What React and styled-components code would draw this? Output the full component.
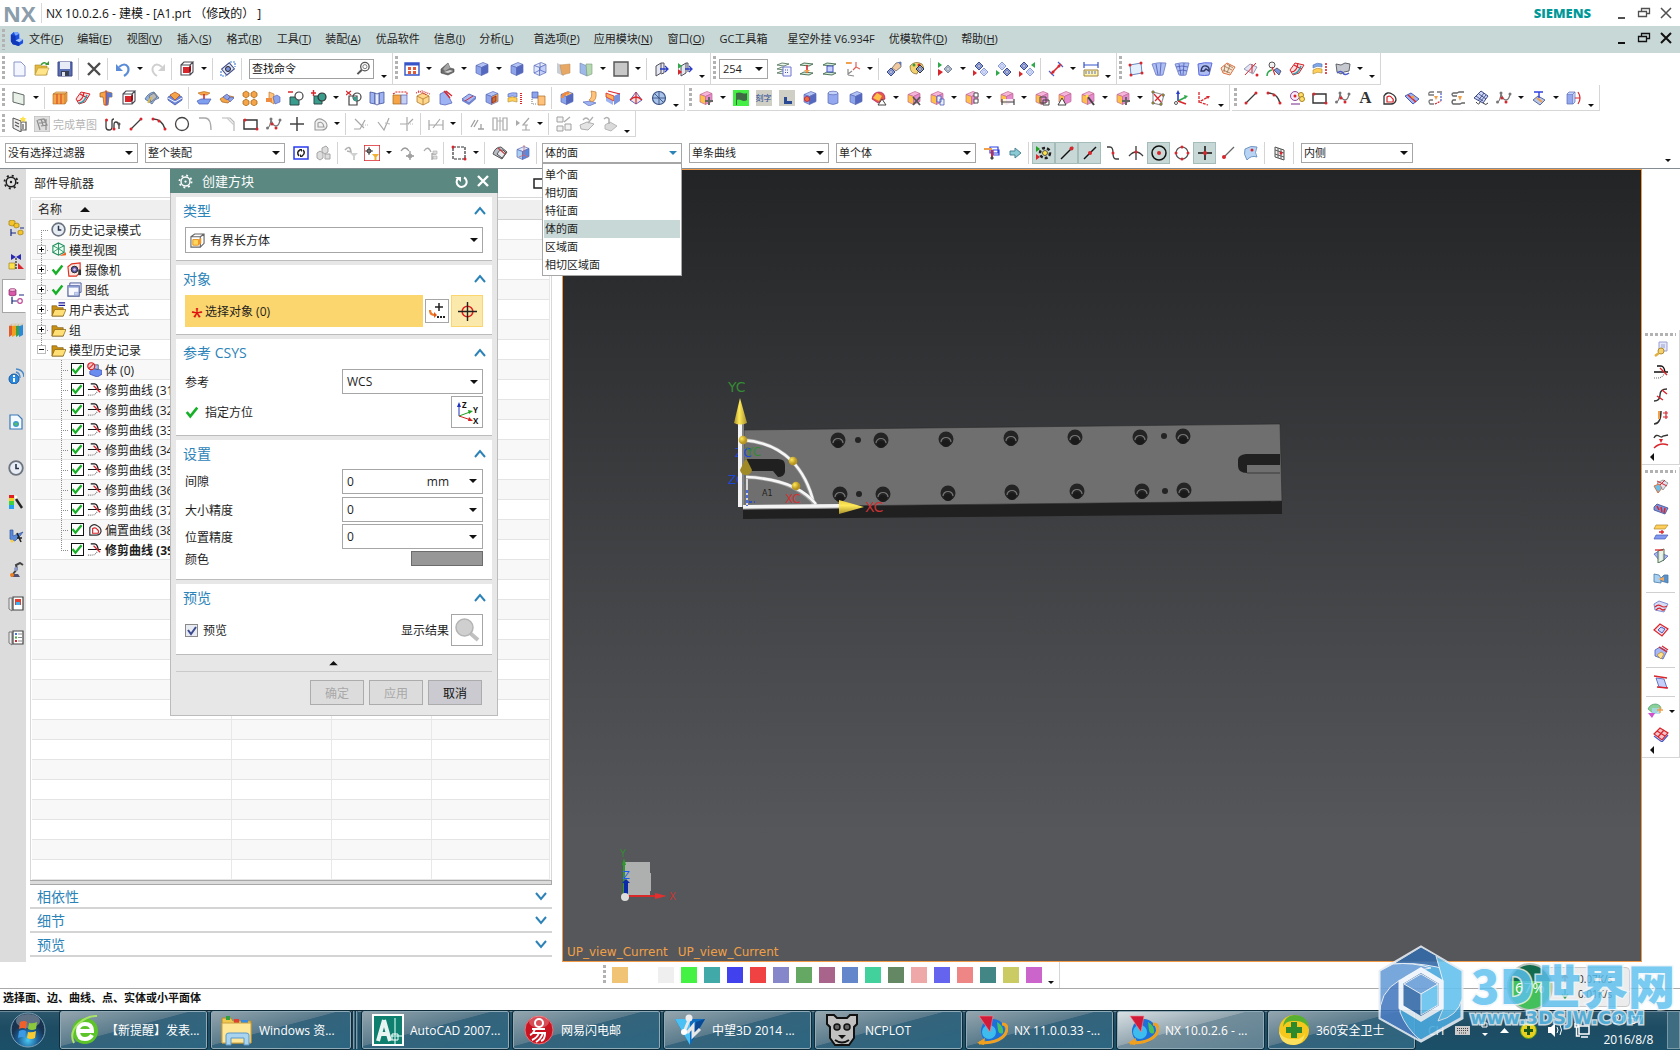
import React from 'react';
import styled, { createGlobalStyle, css } from 'styled-components';

const GlobalStyle = createGlobalStyle`
  * { box-sizing: border-box; }
  body {
    margin: 0;
    background: #fff;
    color: #1e1e1e;
    font-family: 'Open Sans', 'Noto Sans CJK SC', sans-serif;
    font-size: 11px;
    text-spacing-trim: space-all;
  }
  button, select, input { font: inherit; color: inherit; }
  button { border: 0; padding: 0; background: none; }
  ul { list-style: none; margin: 0; padding: 0; }
  svg { display: block; }
`;

/* ---------- icon drawings, all on a 16 x 16 grid ---------- */

const BLUE = '#7b93dc';
const DARK = '#4a4a55';
const RED = '#d8262c';
const ORANGE = '#f2a04a';

const Iso = ({ t = '#b4c3f5', l = '#8ea4ea', r = '#5468c0', s = '#5a6cb4' }) => (
  <g stroke={s} strokeWidth=".7" strokeLinejoin="round">
    <path d="M2 4.5 9 1.5l5 2-6.5 3z" fill={t} />
    <path d="M2 4.5 7.5 6.5v8L2 12z" fill={l} />
    <path d="M7.5 6.5 14 3.5v8l-6.5 3z" fill={r} />
  </g>
);
const Part = () => <Iso t="#f6b6dc" l="#ffc04a" r="#e58ad0" s="#c06a90" />;
const Dot = ({ x, y, c = RED, r = 1.5 }) => <circle cx={x} cy={y} r={r} fill={c} />;
const Line = ({ d, c = '#3c3c3c', w = 1.2, dash }) => (
  <path d={d} stroke={c} strokeWidth={w} fill="none" strokeDasharray={dash} />
);
const Gem = ({ x = 8, y = 8, c = '#8fa2e0', s = '#3d4a86' }) => (
  <g>
    <path d={`M${x - 4} ${y}l4-4 4 4-4 4z`} fill={c} stroke={s} strokeWidth="1" />
    <circle cx={x} cy={y} r="1.3" fill="#fff" stroke={s} strokeWidth=".6" />
  </g>
);

const glyphs = {
  nx: <><path d="M2 4 5 1h4l2 2v5l4 1v4l-5 3-6-2-2-3z" fill="#1b50e0" /><path d="M5 1h4l2 2-4 2z" fill="#7aa8ff" /><path d="M7 10l4-2 4 1-4 3z" fill="#a8c8ff" /><path d="M2 4l5 1v6l4 1v4l-7-2-2-3z" fill="#1038b8" /></>,
  fresh: <path d="M3 1h7l4 4v10H3z" fill="#f4f6ff" stroke="#8a96c8" />,
  open: <><path d="M1 4h5l1 1h6v9H1z" fill="#e4b83c" stroke="#a88420" strokeWidth=".6" /><path d="M1 14 4 7h11l-3 7z" fill="#ffe48a" stroke="#b89838" strokeWidth=".6" /><Line d="M7 4q3-4 6-1" c="#3a9a3a" w={1.6} /><path d="M11 4h4V0z" fill="#3a9a3a" /></>,
  save: <><path d="M1 1h14v14H1z" fill="#5a6eb4" stroke="#3a4884" /><path d="M3 1h10v7H3z" fill="#e8ecf6" /><path d="M4 10h8v5H4z" fill="#3a3f50" /><path d="M5 11h3v4H5z" fill="#dfe3ee" /></>,
  cut: <Line d="M2 2 14 14M14 2 2 14" w={2.4} c="#4c4c4c" />,
  undo: <><Line d="M4 6q6-5 9 0 2 5-4 9" c="#5a8cd8" w={2.2} /><path d="M1 3v7h7z" fill="#5a8cd8" /></>,
  redo: <><Line d="M12 6Q6 1 3 6q-2 5 4 9" c="#d0d0d0" w={2} /><path d="M15 3v7H8z" fill="#d0d0d0" /></>,
  redcube: <><path d="M2 4h9v10H2zM2 4l3-3h9l-3 3M14 1v10l-3 3" fill="none" stroke={DARK} strokeWidth="1.1" /><path d="M4 6h6v6H4z" fill={RED} /><path d="M10 6l2-2v6l-2 2z" fill="#8a1016" /></>,
  orient: <><g transform="rotate(-40 8 8)"><path d="M3 4h10v8H3z" fill="#dfe4f5" stroke="#3d4a86" /></g><circle cx="8" cy="8" r="2.5" fill={BLUE} stroke="#222" /><Line d="M1 10v5h5M10 1h5v5" c="#4a86d8" dash="2 1" /></>,
  search: <><circle cx="9.5" cy="6" r="4.5" fill="none" stroke="#555" strokeWidth="1.4" /><circle cx="9.5" cy="6" r="2.2" fill="none" stroke="#777" /><Line d="M6 9.5 1.5 14" w={2.2} c="#555" /></>,
  windows: <><path d="M1 2h14v12H1z" fill="#fff" stroke="#3454c8" strokeWidth="1.4" /><path d="M1 2h14v2.5H1z" fill="#3454c8" /><path d="M4 6h3v3H4zM9 6h3v3H9zM4 10h3v3H4zM9 10h3v3H9z" fill="#e05a3a" /></>,
  solid: <><path d="M2 8l7-6 2 5 4 1v3l-6 3-7-2z" fill="#6c6c6c" stroke="#444" strokeWidth=".6" /><path d="M9 2l2 5-5 3-2-2z" fill="#a5a5a5" /><path d="M5 11l6-2 3 1-5 2z" fill="#d4d4d4" /></>,
  cube: <Iso />,
  wirecube: <><Iso t="#e4eaff" l="#dfe6ff" r="#c4cff8" /><Line d="M2 12l6-3 6 2.5M8 9V2" c="#5468c0" w={0.8} /></>,
  plane: <><path d="M2 2l7 3v10l-7-3z" fill="#c9cdd6" /><path d="M5 4l10-1v9l-8 2z" fill="#e8a865" stroke="#b98a55" strokeWidth=".5" /></>,
  plane2: <><path d="M2 2l7 3v10l-7-3z" fill="#9eb8e8" stroke="#6f86b5" strokeWidth=".6" /><path d="M8 3h6v10l-5 2z" fill="#b6d8b0" stroke="#7a9a78" strokeWidth=".6" /></>,
  greybox: <path d="M1 1h14v14H1z" fill="#c8c8c8" stroke="#555" strokeWidth="1.4" />,
  door: <><path d="M2 5l5-3v10l-5 3zM7 2h3v10l-3 1" fill="#e4e6f0" stroke="#50505c" /><Line d="M6 8h8M11 5l3 3-3 3" c="#2a3cc8" w={1.3} /></>,
  door2: <><path d="M4 5l5-3v10l-5 3zM9 2h2v9" fill="#e4e6f0" stroke="#50505c" /><path d="M1 2l4 3-4 3z" fill="#2fa84a" /><path d="M1 8l4 3-4 3z" fill={RED} /><Line d="M8 8h6M12 5l3 3-3 3" c="#2a3cc8" w={1.3} /></>,
  layers: <><path d="M1 4l5-2 7 1-5 2zM1 8l5-2 7 1-5 2zM1 12l5-2 7 1-5 2z" fill="#eef6ee" stroke="#5c7c68" strokeWidth=".9" /><path d="M7 6h8v9H7z" fill="#f6f6ff" stroke="#6a74d0" /><Line d="M9 9h4M9 11.5h4" c="#4452c0" dash="1 1" /></>,
  layermove: <><path d="M1 4l4-2 9 1-4 2zM1 13l4-2 9 1-4 2z" fill="#d7ecd9" stroke="#40684c" strokeWidth=".9" /><Line d="M8 4v8" c={RED} w={1.6} /><path d="M5 9h6l-3 3z" fill={ORANGE} /></>,
  layercopy: <><path d="M1 4l4-2 9 1-4 2zM1 13l4-2 9 1-4 2z" fill="#d7ecd9" stroke="#40684c" strokeWidth=".9" /><path d="M5 5h6v6H5z" fill="#c9d2fb" stroke="#4452c0" /></>,
  csys: <><Line d="M3 14V8M3 14l6 1M3 13l4-3" c="#8a8a8a" /><Line d="M1 2h6M11 1v5l4 2M11 6l-3 3" c="#e06058" /><path d="M1 1h5v2H1z" fill={ORANGE} /></>,
  hand: <><Gem x={5} y={11} /><path d="M6 7l4-5 5-1v5l-5 4z" fill="#f0c9a0" stroke="#555" strokeWidth=".7" /><path d="M12 1h3v4z" fill="#5b78c8" /></>,
  palette: <><path d="M1 5q5-6 12-2 4 6-2 7-3 0-3 3-7 0-7-8z" fill="#f3d070" stroke="#8a7434" strokeWidth=".8" /><Dot x={5} y={4} c="#3a9a3a" /><Dot x={10} y={4} /><Gem x={11} y={8} s="#333" /></>,
  gemred: <><path d="M0 8l5 3-5 4z" fill={RED} /><path d="M0 1l4 3-4 3z" fill="#2fa84a" /><Gem x={10} y={8} c="#aab7c8" s="#7b88a0" /></>,
  gem2: <><Gem x={6} y={5} /><Gem x={11} y={11} c="#cfd9fa" s="#8a9ad8" /><path d="M0 9l4 3-4 3z" fill={RED} /></>,
  gem3: <><Gem x={6} y={5} c="#cfd9fa" s="#8a9ad8" /><Gem x={11} y={11} /><path d="M0 9l4 3-4 3z" fill="#2fa84a" /></>,
  gem4: <><Gem x={5} y={5} /><Gem x={11} y={11} c="#cfd9fa" s="#8a9ad8" /><path d="M16 1l-4 3 4 3z" fill="#2fa84a" /><path d="M0 10l4 3-4 3z" fill={RED} /></>,
  measure: <><Line d="M1 10l5 5M10 1l5 5" c="#4a5ac8" /><Line d="M3 13 13 3" c={RED} w={1.6} /><Dot x={5} y={11} /><Dot x={11} y={5} /></>,
  ruler: <><Line d="M1 4h14M1 1v6M15 1v6" c="#3454c8" /><path d="M1 9h14v6H1z" fill="#fff3b0" stroke="#a08438" /><Line d="M3 10v3M6 10v3M9 10v3M12 10v3" c="#3454c8" w={0.8} /></>,
  fourpt: <><path d="M2 4l11-2 1 10-11 2z" fill="#e4f0fb" stroke="#6a8ac0" /><Dot x={2} y={4} /><Dot x={13} y={2} /><Dot x={14} y={12} /><Dot x={3} y={14} /></>,
  ruled: <><path d="M1 3q6-2 14-1l-3 12q-4 1-7 0z" fill="#aebdf2" stroke="#6a7ac4" strokeWidth=".8" /><Line d="M5 3l2 11M10 2l-1 12" c="#4a5ab4" w={0.8} /></>,
  mesh: <><path d="M1 3q6-2 14-1l-3 12q-4 1-7 0z" fill="#aebdf2" stroke="#6a7ac4" strokeWidth=".8" /><Line d="M5 3l2 11M10 2l-1 12M2 6q6-2 12 0M4 10q5-2 9 0" c="#4a5ab4" w={0.8} /></>,
  studio: <><path d="M1 3q6-2 14-1l-3 12q-4 1-10 0z" fill="#aebdf2" stroke="#5a6ae0" strokeWidth="1" /><Line d="M4 10q1-6 5-5 4 1 3 5l-3-2-2 2z" w={1.4} c="#333a66" /></>,
  fit: <><path d="M1 7l6-5 8 4-5 8-7-2z" fill="#f6e6d2" stroke="#e07040" /><Line d="M4 5l8 4M7 3l6 4M3 9l7 3M5 4l-1 7M10 4 7 12" c="#9a7050" w={0.8} /></>,
  sheetred: <><path d="M1 8l6-5 7 3-4 7z" fill="#e2e6f4" stroke="#8088a8" strokeWidth=".8" /><Line d="M2 14 13 2M9 3v9" c={RED} w={1} /><Dot x={14} y={14} /></>,
  sweep: <><circle cx="6" cy="4" r="3" fill="#f2f2f2" stroke="#555" /><Line d="M1 15q0-5 5-6" c="#2fa84a" w={1.5} /><Line d="M6 6l3 8" c={RED} /><path d="M8 9l3-2 4 3-2 4z" fill={BLUE} stroke="#334" strokeWidth=".7" /></>,
  swept: <><path d="M1 9l5-7 9 2-5 8-6 2z" fill="#f7dede" stroke={RED} /><Line d="M2 11q6 0 7-9M5 4q5 3 8 4" c={RED} /><Line d="M4 13q5 0 8-8" c="#2fa0b0" w={1.5} /></>,
  offset: <><path d="M1 4q4-3 9-1v3q-5-2-9 1z" fill="#7fa8e8" stroke="#5070b0" strokeWidth=".6" /><path d="M1 9q4-3 9-1v4q-5-2-9 1z" fill="#ffcf5a" stroke="#b08828" strokeWidth=".6" /><Line d="M14 2v12" c={RED} dash="2 1" w={1.6} /></>,
  grey: <><path d="M1 3l5 1 4-2 5 1-1 7-5 1-3 2-4-2z" fill="#c5c8cf" stroke="#54565c" strokeWidth=".9" /><Line d="M2 12q4-3 6 0t6 0" c="#4a5ac8" w={1.5} /></>,
  datum: <path d="M2 2l11 3v10L2 12z" fill="#e8f0e8" stroke="#5f6a66" />,
  extrude: <><path d="M1 4l3-2h11l-2 2z" fill="#ffd28a" stroke="#b06a20" strokeWidth=".6" /><path d="M1 4h12v10H1zM13 4l2-2v9l-2 3" fill="#f5a548" stroke="#b06a20" strokeWidth=".6" /><Line d="M5 4v10M9 4v10" c="#d8502c" w={1.2} /></>,
  revolve: <><path d="M2 3q6-3 12 0v4h-3l-1 8H6L5 7H2z" fill="#f5a548" stroke="#9a5a20" strokeWidth=".7" /><path d="M8 2v13h2l1-8h3V3z" fill="#5b78c8" /><Line d="M8 0v16" c={RED} w={0.8} /></>,
  blend: <><path d="M1 9q3-6 9-7l5 6q-5 1-7 6z" fill="#8db2e6" stroke="#50648c" strokeWidth=".8" /><path d="M5 6l5-3 3 4-6 5z" fill="#b9b9b9" stroke="#555" strokeWidth=".6" /><Line d="M4 13l3-6" c="#e8b930" w={1.6} /></>,
  thick: <><path d="M1 7l7-4 7 4v3l-7 5-7-5z" fill="#6d86dc" stroke="#3c4c94" strokeWidth=".7" /><path d="M3 5l5-3 5 3-5 5z" fill="#f5a548" stroke="#b04a20" strokeWidth=".7" /><path d="M1 8l7 4 7-4" fill="none" stroke="#fff" /></>,
  pad: <><path d="M2 3q6-3 12 0l-3 2H5z" fill="#f5a548" stroke="#b06a20" strokeWidth=".6" /><Line d="M8 4v6" c={RED} w={1.6} /><path d="M1 11l4-2h10l-3 5H3z" fill="#7fa0ee" stroke="#4a5ab4" strokeWidth=".7" /></>,
  pocket: <><path d="M1 9l6-4 8 2-6 6-6-1z" fill="#f5a548" stroke="#a06020" strokeWidth=".7" /><path d="M4 7l4-3 3 3-3 3zM9 9l3-2 3 1-4 4z" fill="#8ea4ea" stroke="#4a5ab4" strokeWidth=".6" /></>,
  pattern: <g fill="#f5a548" stroke="#a86818" strokeWidth=".8"><path d="M1 3l3-2 3 2v3L4 8 1 6zM9 3l3-2 3 2v3l-3 2-3-2zM1 11l3-2 3 2v3l-3 2-3-2zM9 11l3-2 3 2v3l-3 2-3-2z" /></g>,
  mirror: <><path d="M4 2l5 2v10l-5-3z" fill="#ffc27a" stroke="#b06a20" strokeWidth=".6" /><path d="M1 8h6v4H1z" fill="#f08a3c" /><path d="M8 7l4-2 3 2v5l-5 2z" fill="#8ea4ea" stroke="#4a5ab4" strokeWidth=".6" /></>,
  unite: <><path d="M2 7h9v8H2z" fill="#3a9c8c" stroke="#2a4a48" /><circle cx="11" cy="6" r="4" fill="#fff" stroke="#444" strokeWidth="1.2" /><Line d="M0 2h5" c={RED} w={1.5} /></>,
  subtract: <><path d="M3 6h8v8H3z" fill="#3a9c8c" stroke="#2a4a48" /><circle cx="11" cy="7" r="4" fill="#3a9c8c" stroke="#333" strokeWidth="1.2" /><Line d="M0 3h5M2.5 0v6" c={RED} w={1.4} /></>,
  intersect: <><path d="M3 6h8v9H3z" fill="#fff" stroke="#444" strokeWidth="1.2" /><circle cx="11" cy="7" r="4" fill="none" stroke="#444" strokeWidth="1.2" /><path d="M7 7h4v4H8z" fill="#3a9c8c" /><Line d="M0 1l5 4M5 1 0 5" c={RED} /></>,
  book: <><path d="M1 2l5 1v11l-5-1zM15 2l-5 1v11l5-1z" fill="#9eb4f2" stroke="#44549c" strokeWidth=".8" /><path d="M6 3l2 1 2-1v11l-2 1-2-1z" fill="#e9ecfb" stroke="#44549c" strokeWidth=".8" /></>,
  split: <><path d="M1 5h8v9H1z" fill="#f5a548" stroke="#a86818" strokeWidth=".7" /><path d="M9 5h6v9H9z" fill="#c5d0f6" stroke="#5060b0" strokeWidth=".7" /><Line d="M1 4l3-2h11v3" c={RED} dash="2 1" /></>,
  shell: <><path d="M2 6l6-3 6 3v6l-6 3-6-3z" fill="#ffd88e" stroke="#b07a28" strokeWidth=".8" /><Line d="M2 6l6 3 6-3M8 9v6" c="#b07a28" w={0.8} /><Line d="M1 3l6-2 8 3M3 1l9 4" c={RED} dash="1 1" /></>,
  draft: <><path d="M2 4l6-3 6 12-7 2-5-1z" fill="#9eb4f2" stroke="#4a5ab4" strokeWidth=".7" /><Line d="M6 1l6 7M8 1l6 5" c={RED} w={1.3} /></>,
  slab: <><path d="M1 9l7-5 7 3-7 6z" fill="#a8b8f0" stroke="#4a5ab4" strokeWidth=".8" /><path d="M1 9v2l7 4v-2zM8 15l7-6V7l-7 6z" fill="#6f84d0" /><Line d="M4 11l8-5" c={RED} w={1} /></>,
  boxhole: <><Iso t="#b4c3f5" l="#8ea4ea" r="#f5a548" /><path d="M8 8l4-2v5l-4 2z" fill="#c07030" stroke="#802" strokeWidth=".6" /></>,
  thread: <><path d="M1 4q4-2 9-1v4q-5-2-9 0z" fill="#9eb4f2" stroke="#4a5ab4" strokeWidth=".6" /><path d="M1 8q4-2 9 0v4q-5-2-9 0z" fill="#ffcf5a" stroke="#b08828" strokeWidth=".6" /><Line d="M14 3v11" c={RED} dash="1 1" w={2} /></>,
  joinp: <><path d="M2 2h6v6H2z" fill="#8ea4ea" stroke="#4a5ab4" strokeWidth=".7" /><path d="M8 6h7v9H8z" fill="#ffc27a" stroke="#b06a20" strokeWidth=".7" /><Line d="M2 9v5h5" c="#888" dash="1 1" /></>,
  edge: <><Iso t="#ffc27a" l="#8ea4ea" r="#5468c0" /><Line d="M3 8q1-5 7-5" c="#f08a3c" w={2.4} /></>,
  flange: <><path d="M1 12l8-1 5 2-7 3z" fill="#9eb4f2" stroke="#4a5ab4" strokeWidth=".6" /><path d="M9 1l5 1q1 8-4 10l-3-2q4-3 2-9z" fill="#ffc27a" stroke="#b06a20" strokeWidth=".6" /></>,
  step: <><path d="M1 4l7 3v8l-7-4z" fill="#9eb4f2" /><path d="M1 3l8 3v5l-8-4z" fill="#ffb25a" stroke={RED} strokeWidth=".8" /><path d="M9 6l6-3v8l-6 4z" fill="#7b93dc" /><Line d="M3 1l12 3" c={RED} /></>,
  fan: <><path d="M8 2l6 8-6 4-6-4z" fill="#f7e2e2" stroke="#5a6ac8" /><Line d="M8 2v12M2 10q6-6 12 0" c={RED} /></>,
  wheel: <><circle cx="8" cy="8" r="6.5" fill="#a9c4ea" stroke="#3a5284" strokeWidth="1.2" /><Line d="M8 1v14M2 8h12M4 4l8 8" c="#3a5284" w={0.9} /></>,
  partmove: <><Part /><Line d="M11 7v8M7 11h8" c="#666" w={2} /></>,
  flag: <><path d="M0 0h16v16H0z" fill="#44ee44" /><path d="M3 3q4-1 6 0 3 1 5 0v7q-3 2-6 0-3-1-4 0v5H3z" fill="#3f6a45" /></>,
  engrave: <path d="M0 0h16v16H0z" fill="#cfcfc6" />,
  angle: <><path d="M0 0h16v16H0z" fill="#cfcfc6" /><path d="M5 7h3v4h5v3H5z" fill="#2a4a94" /></>,
  hole: <><Iso /><circle cx="5" cy="9" r="2.6" fill="#ee6a3c" stroke="#a03" strokeWidth=".6" /></>,
  cyl: <><path d="M3 3v10q5 3 10 0V3z" fill="#93a8ee" stroke="#5a6cb4" strokeWidth=".7" /><ellipse cx="8" cy="3" rx="5" ry="1.8" fill="#c6d2fa" stroke="#5a6cb4" strokeWidth=".7" /></>,
  ball: <><path d="M1 9q1-7 7-7 6 0 6 7l-7 4z" fill="#e05a4a" stroke="#a06" strokeWidth=".6" /><path d="M2 8l6 3 3-5-5-3z" fill="#ffc04a" /><path d="M7 15l4-6 4 6z" fill="#fff" stroke="#444" /></>,
  partdel: <><Part /><Line d="M7 7l7 8M14 7l-7 8" w={1.8} c="#555" /></>,
  partcopy: <><Part /><path d="M8 6h4v6H8zM11 9h4v6h-4z" fill="#eaf0ff" stroke="#4a5ab4" strokeWidth=".8" /></>,
  partpair: <><Part /><path d="M10 3h4v4h-4zM10 9h4v4h-4z" fill="#fff" stroke="#555" /></>,
  partdim: <><Part /><path d="M3 9h12v6H3z" fill="#fff" opacity=".8" /><Line d="M3 12h12M3 9v6M15 9v6" c="#444" /></>,
  partgrp: <><Part /><path d="M6 7h6v6H6zM9 10h6v5H9z" fill="none" stroke="#444" /></>,
  parttri: <><Part /><path d="M1 15l4-7 4 7z" fill="#fff" stroke="#444" /></>,
  partwand: <><Part /><Line d="M8 7l6 8" w={2} c="#444" /><Dot x={7} y={6} c="#ffe24a" /></>,
  partnodes: <><Line d="M3 2v11l8 2 3-10z" c="#999" /><Line d="M4 4l7 8M5 11l6-6" c={RED} /><path d="M2 1h2v2H2zM2 12h2v2H2zM12 4h2v2h-2zM10 13h2v2h-2z" fill="#ffe24a" stroke="#222" strokeWidth=".6" /></>,
  axes: <><Line d="M5 11V2" c="#2a3cc8" w={1.6} /><Line d="M5 11l8-4" c="#2fa84a" w={1.6} /><Line d="M5 11l8 3" c={RED} w={1.6} /><path d="M3 4l2-4 2 4z" fill="#2a3cc8" /><path d="M11 5l4 1-3 3z" fill="#2fa84a" /><circle cx="3" cy="13" r="1.5" fill="none" stroke="#555" /></>,
  axesred: <><Line d="M3 2v10l9-5M3 12l9 3" c={RED} dash="3 1" w={1.3} /><path d="M10 6l4 0-2 3z" fill={RED} /></>,
  line: <><Line d="M3 13 13 3" /><Dot x={3} y={13} /><Dot x={13} y={3} /></>,
  arc: <><Line d="M2 3q9 0 12 10" w={1.4} /><Dot x={2} y={3} /><Dot x={8} y={5} /><Dot x={14} y={13} /></>,
  circles: <><circle cx="6" cy="6" r="4.5" fill="#f8e8f8" stroke="#8a4a9a" /><Dot x={6} y={6} /><circle cx="12" cy="5" r="2.5" fill="#ffdf6a" stroke="#a88420" /><circle cx="13" cy="9" r="2.5" fill="#ffdf6a" stroke="#a88420" /><Line d="M2 14h9" c="#8a4a9a" /></>,
  rect: <><path d="M1 4h13v9H1z" fill="none" stroke="#333" strokeWidth="1.4" /><Dot x={2} y={4} /><Dot x={14} y={13} /></>,
  spline: <><Line d="M1 12q3 0 4-8 2 6 5 6 3 0 4-6" c="#777" w={1.3} /><Dot x={1.5} y={12} c="#777" /><Dot x={5} y={3} c="#777" /><Dot x={6} y={8} /><Dot x={14} y={4} c="#777" /><Dot x={10} y={12} /></>,
  region: <><path d="M3 14V6q3-5 8-2 4 2 4 6-1 4-5 4z" fill="none" stroke="#333" strokeWidth="1.3" /><path d="M6 12V7q3-2 5 1 2 1 1 4z" fill="none" stroke={RED} strokeWidth="1.2" /></>,
  surfcurve: <><path d="M1 6l6-3 8 6-6 5z" fill="#9eb4f2" stroke="#4a5ab4" /><Line d="M4 5l8 7" c={RED} w={1.6} /><Dot x={9} y={7} c={ORANGE} /></>,
  proj: <><Line d="M7 2H4Q1 2 2 5h5M6 10H3q-2 1 0 4h4M10 2h5" c="#777" w={1.3} /><path d="M7 6h4l-2 4z" fill={ORANGE} /><Line d="M8 14l6-3" c={RED} dash="2 1" /><Line d="M14 3v9" c="#4a5ac8" dash="2 1" /></>,
  proj2: <><Line d="M14 2H9L7 3H3Q1 4 3 6h4M6 10H3q-2 2 0 4h7l2-1h3" c="#666" w={1.3} /><path d="M8 6h4l-2 5z" fill={ORANGE} /></>,
  net: <><path d="M8 1l7 5-5 7-9-5z" fill="#cfd7f6" stroke="#3d4a86" /><Line d="M3 6l7 5M6 4l7 5M11 3 5 11M13 5l-6 7" c="#3d4a86" w={0.9} /><Line d="M3 12q3 4 4 0M10 13q3 3 5 0" w={1} /></>,
  extend: <><path d="M2 10l5-4 7 4-5 5z" fill="#b8c8ea" stroke="#5a6c9c" /><Line d="M3 2h9M8 2v6" c="#3040e0" w={1.4} /><Line d="M6 8l5 4" c={ORANGE} w={1.8} /></>,
  cylmove: <><path d="M1 4v10h6V4z" fill="#93a8ee" stroke="#5a6cb4" strokeWidth=".7" /><path d="M1 4l2-2h6L7 4M9 2v10l-2 2" fill="#c6d2fa" stroke="#5a6cb4" strokeWidth=".7" /><Line d="M9 8h5M12 2q4 6 0 12" c={RED} w={1.2} /></>,
  sketch: <><path d="M2 2l8 3v11l-8-4z" fill="#eee" stroke="#555" /><Line d="M4 6l4 2M4 9l4 2M10 6h5v8h-5M12 8v5" c="#555" /><path d="M12 0l1 2 2 0-1 2 1 2-3-1-2 1 0-2-1-2 2 0z" fill="#ffe24a" /></>,
  finish: <><path d="M0 0h16v16H0z" fill="#dedede" stroke="#b5b5b5" /><Line d="M3 4l3 10M4 4l6-1 3 6-6 1M7 3l2 6M5 7l6-1M12 3v11" c="#8c8c8c" /></>,
  profile: <><Line d="M1 5v6q0 3 3 3t3-3V5q0-2 2-2M9 13V9q0-3 2-3t3 3v4" w={1.3} /><Dot x={1.5} y={4} /><Dot x={9} y={13} /><Dot x={14} y={8} c="#555" /></>,
  circle: <circle cx="8" cy="8" r="6.5" fill="none" stroke="#444" strokeWidth="1.3" />,
  fillet: <Line d="M2 2h6q6 0 6 12" c="#a8a8a8" w={1.3} />,
  chamfer: <><Line d="M2 2h8l4 4v9" c="#b8b8b8" w={1.2} /><Line d="M7 2l7 7" c="#ccc" /></>,
  plus: <Line d="M8 1v14M1 8h14" c="#444" w={1.5} />,
  offg: <path d="M3 14V6q3-5 8-2 4 2 4 6-1 4-5 4zM6 11V7q3-2 5 1l1 3z" fill="#f2f2f2" stroke="#9a9a9a" strokeWidth="1.1" />,
  trimg: <><Line d="M2 3l9 9M1 13h6l5-9" c="#a8a8a8" /><Line d="M10 9h5" c="#bbb" dash="1 1" /></>,
  trimg2: <><Line d="M2 6l6 8 5-12" c="#a8a8a8" /><Line d="M9 7l5 1" c="#bbb" /></>,
  cornerg: <><Line d="M8 1v14M1 8h7M9 8l5-5" c="#a8a8a8" /><Line d="M9 8h6" c="#bbb" dash="1 1" /></>,
  dimg: <><Line d="M1 4v10M15 4v10M1 9h14M5 12l7-9" c="#a8a8a8" w={1.2} /></>,
  perp: <><Line d="M2 11l4-7M5 11l4-7M12 8v5M9 13h6" c="#a0a0a0" w={1.3} /></>,
  symg: <><path d="M1 2h4v12H1zM11 2h4v12h-4z" fill="none" stroke="#a8a8a8" strokeWidth="1.2" /><Line d="M8 1v14M5 5h6" c="#b5b5b5" /></>,
  conv: <><path d="M1 4l4 3-4 3z" fill="#aaa" /><Line d="M14 2 8 9h5M11 9v5M7 14h8" c="#a8a8a8" w={1.2} /></>,
  boxesg: <><path d="M1 1h6v5H1zM1 10h6v5H1zM9 8h6v6H9z" fill="#f4f4f4" stroke="#a0a0a0" /><Line d="M8 6l6-5" c="#aaa" /></>,
  cadg: <><path d="M1 9l7-3 7 2-6 6-7-1z" fill="#e4e4e4" stroke="#b0b0b0" /><Line d="M4 4q3-4 6 0M9 7l5-6" c="#b0b0b0" w={1.3} /></>,
  cadg2: <><path d="M3 9l5-3 7 4-6 5-6-2z" fill="#dadada" stroke="#b8b8b8" /><Line d="M2 3q3-3 5 0v5" c="#b0b0b0" w={1.5} /></>,
  refresh: <><path d="M1 2h14v12H1z" fill="#fff" stroke="#2a3cf0" strokeWidth="1.5" /><Line d="M6 11q-3-4 1-6M10 5q3 3-1 6" w={1.5} c="#222" /><path d="M6 4h3v3zM10 12H7V9z" fill="#222" /></>,
  asmg: <><path d="M6 3l4-2 2 2v4l-3 2-3-2zM1 8l3-2 3 2v5l-3 2-3-2zM9 9h5v5H9z" fill="#ddd" stroke="#a5a5a5" /></>,
  filterg: <><Line d="M2 5q5-6 6 2l-4-1" c="#b0b0b0" w={1.6} /><path d="M7 8h8l-3 3v4h-2v-4z" fill="#d0d0d0" /></>,
  filter: <><path d="M0 0h16v16H0z" fill="#fff" stroke={RED} strokeWidth="1.500" /><circle cx="5" cy="6" r="2" fill="none" stroke="#222" /><Line d="M5 2v8M1 6h8" c="#222" w={0.8} /><path d="M8 9h7l-2.5 3v3h-2v-3z" fill="#f0b030" /></>,
  target: <><Line d="M2 6q4-6 8 0M11 6v9M7 11h8" c="#999" w={1.3} /><circle cx="11" cy="11" r="2" fill="none" stroke="#999" /></>,
  treeg: <><Line d="M2 6q4-6 7 1M10 8v7M10 9h4M10 13h4" c="#aaa" w={1.3} /><path d="M11 6h4v3h-4zM11 11h4v3h-4z" fill="#ddd" stroke="#aaa" strokeWidth=".6" /></>,
  marquee: <><path d="M2 2h12v12H2z" fill="none" stroke="#333" strokeDasharray="3 1" strokeWidth="1.2" /><Dot x={2} y={2} /><Dot x={14} y={14} /></>,
  shade: <><path d="M1 9q2-7 8-7l6 5-5 7z" fill="#b9bdc6" stroke="#555" /><path d="M5 9q2-5 6-4l3 3-4 5z" fill="#e8eaf0" stroke="#555" /><Line d="M6 3l7 6" c="#c04040" /></>,
  bluebox: <><Iso t="#dce9ff" l="#a8d0f4" r="#5a8ae0" /><Line d="M9 0v10l4 2M9 10l-5 2" c="#e06060" w={0.8} /></>,
  pathsel: <><path d="M6 2h8v6H6zM9 5h6v5H9z" fill="none" stroke="#3040e0" strokeWidth="1.2" /><Line d="M0 4h8" c={ORANGE} w={2} /><Line d="M8 5v7" c={RED} w={2} /><path d="M6 13l2-2 2 2-2 2z" fill="#444" /></>,
  arrow: <path d="M3 6h5V3l6 5-6 5v-3H3z" fill="#8ccbd4" stroke="#4a8494" />,
  snapall: <><path d="M0 1l4 3-4 3z" fill="#22a022" /><path d="M0 9l4 3-4 3z" fill={RED} /><circle cx="9" cy="8" r="5" fill="none" stroke="#222" strokeDasharray="3 2" strokeWidth="2.5" /><circle cx="9" cy="8" r="2.5" fill="#ffe24a" stroke="#222" strokeWidth=".7" /></>,
  endpt: <><Line d="M2 14 14 2" c="#111" w={1.4} /><Dot x={12.5} y={3.5} r={2} /></>,
  midpt: <><Line d="M2 14 14 2" c="#111" w={1.4} /><Dot x={8} y={8} r={2} /></>,
  ctrlpt: <><Line d="M2 2h3q3 0 3 6t3 6h3" w={1.3} /><Dot x={8} y={8} /></>,
  inter: <><Line d="M8 1v14M1 11q7-8 14 0" w={1.3} /><Dot x={8} y={7} /></>,
  center: <><circle cx="8" cy="8" r="7" fill="none" stroke="#111" strokeWidth="1.5" /><Dot x={8} y={8} r={2} /></>,
  quad: <><circle cx="8" cy="8" r="6" fill="none" stroke="#555" strokeWidth="1.2" /><Dot x={8} y={2} /><Dot x={8} y={14} /><Dot x={2} y={8} /><Dot x={14} y={8} /></>,
  exist: <><Line d="M8 1v14M1 8h14" c="#111" w={1.5} /><Dot x={8} y={8} r={2} /></>,
  oncurve: <><Line d="M3 13 14 2" c="#666" /><Dot x={4} y={12} r={2} /></>,
  onface: <><path d="M2 4q6-4 12-2-3 6 0 10-6-2-10 3Q0 9 2 4z" fill="#b7d4f4" stroke="#5a84b8" strokeWidth=".8" /><Dot x={9} y={5} /></>,
  gridpt: <><path d="M3 2l9 3v10l-9-3z" fill="#eee" stroke="#555" /><Line d="M6 3v10M9 4v10M3 5l9 3M3 9l9 3" c="#555" w={0.9} /><Dot x={9} y={8} /></>,
  gear: <><circle cx="8" cy="8" r="4.8" fill="none" stroke="currentColor" strokeWidth="1.5" /><circle cx="8" cy="8" r="6.5" fill="none" stroke="currentColor" strokeWidth="1.8" strokeDasharray="2 3.1" /><circle cx="8" cy="8" r="1.2" fill="currentColor" /></>,
  asmnav: <><path d="M1 1l3-1 3 1v4L4 6 1 5zM10 11l3-1 2 1v3l-3 1-2-1z" fill="#f4c52a" stroke="#a07c10" strokeWidth=".7" /><path d="M6 4l3-1 2 1v3L8 8 6 7z" fill="#f4c52a" stroke="#a07c10" strokeWidth=".7" /><Line d="M3 9v7M3 13h5M12 8h4" c="#1a2a80" w={1.2} /></>,
  constr: <><path d="M3 0v6l5-3 5 3V0L8 3z" fill="#2a2ab4" /><path d="M1 9h6v6H1z" fill="#ffe24a" stroke="#a08420" strokeWidth=".7" /><path d="M10 9l6 6h-6z" fill={RED} /><Line d="M8 4v12" dash="2 1" c="#222" /></>,
  partnav: <><path d="M1 2v5q3 2 7 0V2z" fill="#d85aa8" stroke="#8a2a6a" strokeWidth=".7" /><ellipse cx="4.5" cy="2" rx="3.5" ry="1.4" fill="#f8c0e0" stroke="#8a2a6a" strokeWidth=".7" /><Line d="M4 9v7M4 13h5M11 7h5" c="#1a2a80" w={1.2} /><circle cx="12" cy="13" r="2.3" fill="#fff" stroke="#c04a98" strokeWidth="1.2" /></>,
  books: <><path d="M1 4l3-2v11l-3 2z" fill="#e05a2a" /><path d="M4 4l4-2v11l-4 2z" fill="#f0a020" /><path d="M8 4l3-2v11l-3 2z" fill="#38a048" /><path d="M11 4l4-2v11l-4 2z" fill="#2a8ad8" /><path d="M1 4l3-3h12l-1 2-3 1z" fill="#d8d0c0" opacity=".7" /></>,
  info: <><circle cx="6" cy="11" r="5" fill="#2a8ae0" stroke="#1a5aa0" /><path d="M5 10h2v4H5zM5 7h2v2H5z" fill="#fff" /><Line d="M8 4q4 1 4 6M8 1q8 1 8 8" c="#4a8ac8" w={1.4} /></>,
  page: <><path d="M2 1h8l4 4v10H2z" fill="#f4faff" stroke="#3a78b8" strokeWidth="1.2" /><circle cx="8" cy="10" r="3" fill="#3a9ad0" /><path d="M6 10q2-3 4 0l-2 2z" fill="#58c058" /></>,
  clock: <><circle cx="8" cy="8" r="6.8" fill="#e8edf4" stroke="#6c7480" strokeWidth="1.8" /><Line d="M8 4v4.5h3" c="#26344c" w={1.6} /></>,
  rainbow: <><path d="M1 1h5v3H1z" fill="#e02020" /><path d="M1 4h5v3H1z" fill="#f0d020" /><path d="M1 7h5v4H1z" fill="#40d040" /><path d="M1 11h5v4H1z" fill="#20a0f0" /><Line d="M8 5l6 9" w={2.4} c="#222" /><Dot x={8} y={3} c="#ffe" /></>,
  tool: <><path d="M2 2h3v6l10-4-3 4-5 5-5-2z" fill="#5a8ad8" stroke="#3454a0" strokeWidth=".7" /><Line d="M9 5l4 9M9 10h5" w={1.6} c="#222" /><Dot x={4} y={13} c="#ffd030" /></>,
  robot: <><Line d="M5 12l4-5-1-4 4-2 3 2" c="#444" w={2} /><Dot x={8} y={7} c="#8a9ac8" r={2} /><path d="M3 12h7l2 3H3z" fill="#505070" /><Dot x={4} y={13} c="#f08020" r={2} /></>,
  role1: <><path d="M1 2h3v13l-3-2z" fill="#eee" stroke="#777" /><path d="M5 1h10v13H5z" fill="#fff" stroke="#444" strokeWidth="1.2" /><path d="M7 3h6v6H7z" fill="#e04030" /><path d="M8 6h4v3H8z" fill="#40b0f0" /></>,
  role2: <><path d="M1 2h3v13l-3-2z" fill="#eee" stroke="#777" /><path d="M5 1h10v13H5z" fill="#fff" stroke="#444" strokeWidth="1.2" /><Line d="M10 4h4M10 7.5h4M10 11h4" c="#888" /><path d="M7 3h2v2H7z" fill="#3a78e0" /><path d="M7 6.5h2v2H7z" fill="#38b048" /><path d="M7 10h2v2H7z" fill={RED} /></>,
  modelview: <><path d="M8 1l6 3v7l-6 3-6-3V4z" fill="#eafff0" stroke="#1c8a5a" strokeWidth="1.1" /><Line d="M2 4l6 3 6-3M8 7v7M2 11l6-4 6 4M8 1v6" c="#1c8a5a" w={0.9} /><path d="M9 15l7-4v3z" fill="#f06020" /></>,
  camera: <><path d="M1 5l4-3 9-1v10l-4 4H2z" fill="#fbe6e2" stroke="#e03020" strokeWidth="1.2" /><circle cx="8" cy="8" r="3.5" fill="#5a5aa8" stroke="#222" /><circle cx="8" cy="8" r="1.4" fill="#e8c0f0" /><path d="M12 8h3v6h-3z" fill="#333" /></>,
  drawing: <><path d="M3 1h12v10H3z" fill="#eef" stroke="#4a5a94" /><path d="M1 4h12v11H1z" fill="#f8f9ff" stroke="#4a5a94" strokeWidth="1.2" /><path d="M1 4h12v2H1z" fill="#8a9ad0" /><path d="M8 11h4v3H8z" fill="#c9d2ee" stroke="#8a9ad0" strokeWidth=".6" /></>,
  folder: <><path d="M1 4h5l1 2h6v9H1z" fill="#c98f12" stroke="#7c5a10" strokeWidth=".7" /><path d="M1 15 4 8h12l-3 7z" fill="#ffdf76" stroke="#7c5a10" strokeWidth=".7" /></>,
  folderx: <><path d="M1 4h5l1 2h6v9H1z" fill="#c98f12" stroke="#7c5a10" strokeWidth=".7" /><path d="M1 15 4 8h12l-3 7z" fill="#ffdf76" stroke="#7c5a10" strokeWidth=".7" /><Line d="M8 1h7M8 3.5h7" c="#1a1a9a" w={1.3} /></>,
  body: <><path d="M3 10l4-4 9 3v4l-5 3-8-3z" fill="#6a8cf0" stroke="#3040a0" strokeWidth=".7" /><path d="M7 7V3h5v5z" fill="#a8bcfa" stroke="#333" strokeWidth=".7" /><circle cx="4.5" cy="4.5" r="3.7" fill="#f6c8c8" stroke={RED} strokeWidth="1.3" /><Line d="M2 7l5-5" c={RED} /></>,
  trim: <><Line d="M4 2h4q3 0 4 6M1 8h14" c="#111" w={1.3} /><Line d="M7 4l7 7" c={RED} w={1.4} /><Line d="M1 14h4q4 0 6-4" c="#777" dash="1 1" /></>,
  check: <Line d="M2 8l4 5 8-10" c="#18b028" w={3} />,
  bbox: <><path d="M1 4h10v11H1zM1 4l4-3h10v10l-4 4M11 4l4-3" fill="none" stroke="#666" strokeWidth="1.2" /><path d="M3 7h6v6H3z" fill="#ffd65a" stroke="#e0901c" /><path d="M9 7l3-2v6l-3 2z" fill="#f0962c" /></>,
  points: <><Line d="M10 0v8M6 4h8" c="#222" w={1.5} /><Line d="M1 7q0 5 5 5" c="#f07a2a" w={2.2} /><path d="M5 9v6l3-3z" fill="#e05a1a" /><path d="M8 13h2v2H8zM11 13h2v2h-2zM14 13h2v2h-2z" fill="#222" /></>,
  cross: <><circle cx="8" cy="8" r="4.5" fill="none" stroke="#e02020" strokeWidth="1.3" /><Line d="M8 0v16M0 8h16" c="#222" w={1.2} /></>,
  key: <><path d="M6 1h8v9H6z" fill="#e4e6fa" stroke="#9aa0d0" /><Line d="M8 4h4M8 6h4" c="#9aa0d0" /><circle cx="8" cy="10" r="3" fill="#f4d070" stroke="#b08c30" /><Line d="M6 12l-4 3" c="#e0b040" w={2.4} /></>,
  divide: <><Line d="M1 14q6 0 6-6t7-6" w={1.4} c="#333" /><Line d="M4 9l6 4M9 3l5 4" c={RED} w={1.5} /></>,
  length: <><Line d="M1 14q7 0 7-13" w={1.5} c="#333" /><Line d="M6 9V1" c={ORANGE} w={2} /><Line d="M10 3h5M13 1v8M10 7h5" c={RED} w={1.2} /></>,
  smooth: <><Line d="M1 5q2-4 5-2t4 0l5-1" w={1.4} c="#333" /><path d="M6 6h4l-2 4z" fill={RED} /><Line d="M1 15q6-6 14-3" c={RED} w={1.4} /></>,
  xform: <><path d="M4 5l6-3 5 3-5 7z" fill="#dfe2ee" stroke="#777" strokeWidth=".7" /><Line d="M4 3l10 5M6 8l6-6" c={RED} w={1} /><path d="M1 8l5-2 3 4-4 5z" fill="#6ac0e8" stroke="#e07040" /></>,
  patch: <><path d="M1 6l3-3 11 4-3 6-11-4z" fill="#7f92d8" stroke="#3c4c94" strokeWidth=".8" /><path d="M4 5l2 4M8 6l1 5M12 7l-1 5" stroke={RED} strokeWidth="1.5" /></>,
  flat: <><path d="M3 1h12l-3 4H1z" fill="#ffcf5a" stroke="#b08828" strokeWidth=".7" /><Line d="M9 6v4M6 8h5" c={RED} w={1.3} /><path d="M3 11h12l-3 4H1z" fill="#7f9af0" stroke="#4a5ab4" strokeWidth=".7" /></>,
  section: <><path d="M1 7l5-3v9zM10 7l5 2-5 5z" fill="#a8b8f4" stroke="#4a5ab4" strokeWidth=".7" /><path d="M5 4l6-2v11l-6 3z" fill="#e4f0e4" fillOpacity=".8" stroke="#507050" /><Line d="M2 3h8" c={RED} w={1.3} /></>,
  bridge: <><path d="M1 4l5 1 2 3v5l-7-1z" fill="#a8d0f0" stroke="#4a78a8" strokeWidth=".8" /><path d="M15 5l-4 0L8 8v3l7 2z" fill="#5a90c8" stroke="#4a78a8" strokeWidth=".8" /><path d="M5 9l6-2v4z" fill="#f0a860" /></>,
  wave: <><path d="M1 5l5-3 9 3-4 8-9-2z" fill="#d8ddf6" stroke="#6a78c8" strokeWidth=".8" /><Line d="M2 8q3-3 6-1t6 0M3 11q3-3 5-1t4 0" c={RED} w={1.2} /></>,
  quilt: <><path d="M1 8l6-6 8 5-6 7z" fill="#f8e2e4" stroke={RED} strokeWidth="1.2" /><path d="M5 8l3-3 4 2-3 4z" fill="#cfd8fa" stroke="#4a5ac8" /></>,
  copyface: <><path d="M2 5l5-3 7 4-4 8-8-3z" fill="#a8b8f4" stroke="#4a5ab4" strokeWidth=".8" /><path d="M4 10l4-3 3 2-3 5z" fill="#ffe08a" stroke="#b08828" strokeWidth=".7" /><Line d="M6 2l8 5M9 1l6 4" c={RED} w={1.3} /></>,
  sheetband: <><path d="M3 4l8 1 3 9-8-1z" fill="#c5d0fa" stroke="#4a5ab4" strokeWidth=".8" /><Line d="M1 2l13 2M4 13l11 1" c={RED} w={1.6} /></>,
  globe: <><path d="M1 6q2-5 8-5 5 1 5 5l-7 5z" fill="#8ad09a" stroke="#4a9a6a" strokeWidth=".7" /><path d="M5 5h8v6H5z" fill="#a8d8f0" opacity=".8" /><path d="M1 10h7l-3 5z" fill="#d050d0" /><Line d="M13 4v6M10 7h6" c={ORANGE} w={1.5} /></>,
  redgrid: <><path d="M1 8l6-6 8 5-6 7z" fill="#f2c4cc" stroke={RED} strokeWidth="1.2" /><Line d="M4 5l8 5M11 4 5 11" c={RED} w={1.2} /><Line d="M1 10l8 6 6-7" c="#4a5ac8" /></>,
};

const Svg16 = styled.svg`
  width: ${({ $s }) => $s || 16}px;
  height: ${({ $s }) => $s || 16}px;
  flex: none;
`;
const Icon = ({ name, size }) => (
  <Svg16 viewBox="0 0 16 16" $s={size} aria-hidden="true">{glyphs[name]}</Svg16>
);

/* ---------- frame ---------- */

const Page = styled.div`
  position: relative;
  display: flex;
  flex-direction: column;
  height: 100vh;
  min-height: 900px;
  overflow: hidden;
`;

const TitleBar = styled.header`
  display: flex;
  align-items: center;
  height: 26px;
  padding: 0 7px 0 3px;
`;
const Logo = styled.span`
  width: 39px;
  border-right: 1px solid #d8d8d8;
  font: 700 22px/20px 'Open Sans', sans-serif;
  color: #8b9dab;
`;
const Title = styled.h1`
  flex: 1;
  margin: 0 0 0 4px;
  font-size: 12px;
  font-weight: 400;
  color: #111;
`;
const Brand = styled.strong`
  margin-right: 24px;
  font: 800 13px 'Open Sans', sans-serif;
  color: #009999;
`;
const WinButtons = styled.div`
  display: flex;
  gap: 8px;
  color: ${({ $c }) => $c || '#505050'};
`;
const WinButton = styled.button`
  width: 14px;
  height: 14px;
  color: inherit;
`;

const MenuBar = styled.nav`
  display: flex;
  align-items: center;
  height: 27px;
  padding: 0 7px 3px 2px;
  background: #c8d8d7;
`;
const Grip = styled.span`
  flex: none;
  width: 3px;
  margin-right: ${({ $wide }) => ($wide ? 4 : 2)}px;
  align-self: stretch;
  margin-top: 3px;
  margin-bottom: ${({ $wide }) => ($wide ? 0 : 3)}px;
  background: repeating-linear-gradient(#b2b2b2 0 3px, transparent 3px 5px);
`;
const MenuItem = styled.a`
  margin-left: ${({ $gap }) => $gap || 14}px;
  color: #222;
  text-decoration: none;
  white-space: nowrap;
`;
const Spacer = styled.span`
  flex: 1;
`;

const BarRow = styled.div`
  display: flex;
  gap: ${({ $gap }) => $gap || 0}px;
  height: ${({ $h }) => $h}px;
`;
const Bar = styled.div`
  display: flex;
  align-items: center;
  padding-left: 2px;
  border-right: 1px solid #d6d6d6;
  border-bottom: 1px solid #d6d6d6;
`;
const ToolButton = styled.button`
  display: grid;
  place-items: center;
  flex: none;
  width: ${({ $narrow }) => ($narrow ? 19 : 23)}px;
  height: 22px;
  ${({ $on }) => $on && css`
    background: #c8d8d7;
    border: 1px solid #a4bdbb;
  `}
`;
const Engraved = styled.span`
  grid-area: 1 / 1;
`;
const EngraveLabel = styled.span`
  grid-area: 1 / 1;
  font-size: 8px;
  line-height: 16px;
  color: #2a4a94;
  z-index: 1;
`;
const FontButton = styled.button`
  width: 23px;
  font: 700 17px/20px 'Liberation Serif', serif;
  color: #333;
`;
const ArrowButton = styled.button`
  display: grid;
  place-items: center;
  flex: none;
  width: 12px;
  height: 22px;
`;
const OverflowButton = styled(ArrowButton)`
  width: 14px;
  align-items: end;
  padding: 0 2px 2px 0;
`;
const Divider = styled.span`
  flex: none;
  width: 1px;
  height: 22px;
  margin: 0 3px 0 2px;
  background: #d4d4d4;
`;
const SketchLabel = styled.button`
  width: 48px;
  text-align: left;
  color: #b4b4b4;
  white-space: nowrap;
`;
const Down = ({ c = '#111', w = 8 }) => (
  <svg width={w} height={w / 2} viewBox="0 0 8 4" aria-hidden="true"><path d="M0 0h8L4 4z" fill={c} /></svg>
);

// "|" divider, "v" drop arrow, ">" overflow, "+name" pressed, "~name" narrow
const Tool = ({ t }) => {
  if (t === '|') return <Divider />;
  if (t === 'v') return <ArrowButton aria-label="更多"><Down w={6} /></ArrowButton>;
  if (t === '>') return <OverflowButton aria-label="工具条选项"><Down w={6} /></OverflowButton>;
  if (t === 'label') return <SketchLabel>完成草图</SketchLabel>;
  const name = t.replace(/^[+~]/, '');
  return (
    <ToolButton aria-label={name} $on={t[0] === '+'} $narrow={t[0] === '~'}>
      {name === 'engrave' ? <><EngraveLabel>刻字</EngraveLabel><Engraved><Icon name={name} /></Engraved></> : <Icon name={name} />}
    </ToolButton>
  );
};
const Tools = ({ list }) => list.split(' ').map((t, i) => <Tool key={i} t={t} />);

const SearchBox = styled.div`
  display: flex;
  align-items: center;
  width: 125px;
  height: 20px;
  margin: 0 4px;
  padding-right: 2px;
  border: 1px solid #a0a0a0;
`;
const SearchInput = styled.input`
  width: 100px;
  padding: 0 2px;
  border: 0;
  outline: 0;
  flex: 1;
  &::placeholder { color: #111; }
`;

const SelectWrap = styled.div`
  position: relative;
  display: grid;
  align-items: center;
  flex: none;
  width: ${({ $w }) => $w}px;
  margin-left: ${({ $ml }) => $ml || 0}px;
  margin-right: ${({ $mr }) => $mr || 0}px;
  > svg {
    grid-area: 1 / 1;
    justify-self: end;
    margin-right: 5px;
    pointer-events: none;
  }
`;
const SelectBox = styled.select`
  grid-area: 1 / 1;
  appearance: none;
  width: 100%;
  height: ${({ $h }) => $h || 20}px;
  padding: 0 14px 0 ${({ $pl }) => $pl || 2}px;
  border: 1px solid #a6a6a6;
  border-radius: 0;
  background: #fff;
`;
const Select = ({ value, label, w, ml, mr, h, pl, arrow, children, id }) => (
  <SelectWrap $w={w} $ml={ml} $mr={mr}>
    <SelectBox id={id} aria-label={label} $h={h} $pl={pl} defaultValue={value}><option>{value}</option></SelectBox>
    <Down c={arrow} />
    {children}
  </SelectWrap>
);

const SelectionBar = styled.div`
  display: flex;
  align-items: center;
  height: 32px;
  padding: 0 4px 0 5px;
  border-bottom: 1px solid #858c92;
`;
const DropList = styled.ul`
  position: absolute;
  top: 20px;
  left: 0;
  right: 0;
  z-index: 20;
  padding: 2px 1px 1px;
  background: #fff;
  border: 1px solid #a6a6a6;
`;
const DropItem = styled.li`
  height: 18px;
  line-height: 18px;
  padding-left: 1px;
  background: ${({ $on }) => ($on ? '#c8d8d7' : 'transparent')};
`;

/* ---------- left side ---------- */

const Main = styled.main`
  position: relative;
  display: flex;
  flex: 1;
  min-height: 0;
`;
const ResourceBar = styled.aside`
  display: flex;
  flex-direction: column;
  width: 26px;
  background: #dcdcdc;
`;
const ResourceTab = styled.button`
  display: grid;
  place-items: center;
  flex: none;
  height: 34px;
  margin: ${({ $gap }) => $gap || 0}px 0 0 2px;
  padding-left: 4px;
  border: 1px solid transparent;
  ${({ $on }) => $on && css`
    background: #fff;
    border-color: #a6a6a6;
    border-right-color: #fff;
  `}
`;
const SettingsTab = styled(ResourceTab)`
  height: 26px;
  padding: 0 6px 0 0;
`;
const NavPanel = styled.section`
  display: flex;
  flex-direction: column;
  width: 522px;
  margin: 0 10px 0 4px;
`;
const NavHead = styled.div`
  display: flex;
  align-items: center;
  justify-content: space-between;
  height: 28px;
  padding: 0 4px;
  font-size: 12px;
`;
const NavBody = styled.div`
  flex: 1;
  min-height: 0;
  overflow: hidden;
  padding: 2px 1px 0;
  border: 1px solid #d8d8d8;
  border-bottom: 0;
`;
const Tree = styled.table`
  width: 100%;
  table-layout: fixed;
  border-collapse: separate;
  border-spacing: 0;
  font-size: 12px;
`;
const Th = styled.th`
  height: 20px;
  padding: 0 0 0 6px;
  text-align: left;
  font-weight: 400;
  line-height: 19px;
  background: #efefef;
  border-bottom: 1px solid #cfcfcf;
  svg {
    display: inline-block;
    margin-left: 18px;
    vertical-align: 2px;
    transform: rotate(180deg);
  }
`;
const Td = styled.td`
  height: 20px;
  padding: 0;
  background: ${({ $alt }) => ($alt ? '#f8f8f8' : '#fff')};
  border-bottom: 1px solid #e4e4e4;
  border-right: 1px solid #e8e8e8;
`;
const Node = styled.div`
  display: flex;
  align-items: center;
  gap: 3px;
  height: 19px;
  padding-left: ${({ $depth }) => $depth * 19}px;
  font-weight: ${({ $bold }) => ($bold ? 700 : 400)};
  white-space: nowrap;
`;
const Twig = styled.span`
  display: grid;
  align-items: center;
  width: 16px;
  height: 20px;
  margin-left: ${({ $depth }) => ($depth ? 1 : 0)}px;
  background:
    repeating-linear-gradient(90deg, #8c8c8c 0 1px, transparent 1px 2px) 9px 10px / 9px 1px no-repeat,
    repeating-linear-gradient(#8c8c8c 0 1px, transparent 1px 2px) 9px ${({ $first }) => ($first ? 10 : 0)}px / 1px ${({ $last }) => ($last ? 10 : 20)}px no-repeat;
`;
const Expander = styled.button`
  display: grid;
  place-items: center;
  width: 9px;
  height: 9px;
  margin-left: 5px;
  background: #fff;
  border: 1px solid #bcbcbc;
`;
const TreeCheck = styled.span`
  display: grid;
  width: 13px;
  height: 13px;
  input {
    grid-area: 1 / 1;
    appearance: none;
    width: 13px;
    height: 13px;
    margin: 0;
    border: 1px solid #111;
    background: #fff;
  }
  svg { grid-area: 1 / 1; pointer-events: none; }
`;
const Splitter = styled.div`
  height: 5px;
  background: #dcdcdc;
  border: 1px solid #a8a8a8;
  border-left-width: 0;
`;
const Fold = styled.button`
  display: flex;
  align-items: center;
  justify-content: space-between;
  height: 24px;
  padding: 0 5px 0 7px;
  font-size: 14px;
  color: #2c83b8;
  border-bottom: 2px solid #d4d4d4;
`;
const NavFoot = styled.div`
  display: flex;
  flex-direction: column;
  padding: 0 0 5px;
`;

const Chevron = ({ up }) => (
  <svg width="12" height="9" viewBox="0 0 12 9" aria-hidden="true">
    <path d={up ? 'M1 8l5-6 5 6' : 'M1 1l5 6 5-6'} fill="none" stroke="#2c83b8" strokeWidth="2" />
  </svg>
);

/* ---------- dialog ---------- */

const Dialog = styled.section`
  position: absolute;
  top: 0;
  left: 170px;
  z-index: 10;
  width: 328px;
  background: #e7e7e7;
  border: 1px solid #bcbcbc;
  border-top: 0;
  font-size: 12px;
`;
const DialogTitle = styled.header`
  display: flex;
  align-items: center;
  gap: 9px;
  height: 24px;
  margin: 0 -1px;
  padding: 0 9px 0 8px;
  background: #5b8982;
  color: #fff;
`;
const DialogHeading = styled.h2`
  flex: 1;
  margin: 0;
  font-size: 13px;
  font-weight: 400;
  line-height: 20px;
`;
const TitleButton = styled.button`
  color: #fff;
`;
const Group = styled.div`
  margin: 4px 5px 0;
  padding: 0 9px ${({ $pb }) => $pb}px;
  background: #fff;
  border-bottom: 1px solid #bcbcbc;
`;
const GroupHead = styled.div`
  display: flex;
  align-items: center;
  justify-content: space-between;
  height: 26px;
  margin: 0 -4px 0 -2px;
  padding-right: 1px;
  h3 {
    margin: 0;
    font-size: 14px;
    font-weight: 400;
    color: #2c83b8;
  }
`;
const FieldRow = styled.div`
  display: flex;
  align-items: center;
  justify-content: space-between;
  gap: 2px;
  height: ${({ $h }) => $h || 27}px;
`;
const TypeBox = styled.div`
  display: grid;
  align-items: center;
  width: 100%;
  > * { grid-area: 1 / 1; }
  > svg { z-index: 1; margin-left: 5px; pointer-events: none; }
`;
const PickField = styled.button`
  flex: 1;
  display: flex;
  align-items: center;
  gap: 4px;
  height: 32px;
  padding-left: 6px;
  background: #fbd56d;
  text-align: left;
`;
const Star = styled.span`
  width: 10px;
  height: 14px;
  font-size: 22px;
  line-height: 22px;
  color: #e01010;
`;
const SmallButton = styled.button`
  display: grid;
  place-items: center;
  width: 24px;
  height: 24px;
  background: #fff;
  border: 1px solid #a6a6a6;
`;
const BigButton = styled(SmallButton)`
  width: 32px;
  height: 32px;
  background: ${({ $hot }) => ($hot ? '#fae9ab' : '#fff')};
  border-color: ${({ $hot }) => ($hot ? '#fbd56d' : '#a6a6a6')};
`;
const Combo = styled.div`
  display: flex;
  align-items: center;
  width: 141px;
  height: 25px;
  padding: 0 5px 0 4px;
  border: 1px solid #a6a6a6;
  input {
    flex: 1;
    min-width: 0;
    padding: 0;
    border: 0;
    outline: 0;
  }
  span { margin-right: 20px; }
`;
const Swatch = styled.button`
  width: 72px;
  height: 15px;
  background: #979797;
  border: 1px solid #6c6c6c;
`;
const Ready = styled.span`
  display: flex;
  align-items: center;
  gap: 6px;
`;
const CheckLabel = styled.label`
  display: flex;
  align-items: center;
  gap: 5px;
  flex: 1;
`;
const CheckCell = styled.span`
  display: grid;
  input {
    grid-area: 1 / 1;
    appearance: none;
    width: 13px;
    height: 13px;
    margin: 0;
    border: 1px solid #8a8a8a;
    background: #e8ecf2;
  }
  svg { grid-area: 1 / 1; }
`;
const DialogFoot = styled.footer`
  margin: 0 5px;
  padding-bottom: 10px;
`;
const FoldUp = styled.button`
  display: grid;
  place-items: center;
  width: 100%;
  height: 17px;
  margin-bottom: 8px;
  padding-right: 2px;
  border-bottom: 1px solid #cacaca;
  svg { transform: rotate(180deg); }
`;
const Actions = styled.div`
  display: flex;
  justify-content: flex-end;
  gap: 5px;
  padding-right: 10px;
`;
const Action = styled.button`
  width: 54px;
  height: 25px;
  background: ${({ disabled }) => (disabled ? '#dcdcdc' : '#cacad0')};
  color: ${({ disabled }) => (disabled ? '#a8a8a8' : '#111')};
  border: 1px solid #acacac;
`;

/* ---------- graphics window ---------- */

const Viewport = styled.div`
  position: relative;
  flex: 1;
  min-width: 0;
  border: 1px solid #f09a48;
  background: linear-gradient(#232426, #56575a 84%);
  svg { width: 100%; height: 100%; }
`;
const ViewNames = styled.div`
  position: absolute;
  left: 4px;
  bottom: 0;
  display: flex;
  gap: 10px;
  font: 12px/17px 'DejaVu Sans', sans-serif;
  color: #f0a048;
`;
const Triad = styled.div`
  position: absolute;
  left: 50px;
  bottom: 54px;
  width: 70px;
  height: 62px;
`;

const RightDock = styled.aside`
  width: 38px;
  padding-top: 161px;
`;
const SideBar = styled.div`
  display: flex;
  flex-direction: column;
  align-items: flex-start;
  padding: 3px 0 3px 7px;
  margin-bottom: 2px;
  border-right: 1px solid #d6d6d6;
  border-bottom: 1px solid #d6d6d6;
`;
const SideGrip = styled.span`
  width: 31px;
  height: 3px;
  margin: 0 0 2px -4px;
  background: repeating-linear-gradient(90deg, #b2b2b2 0 3px, transparent 3px 5px);
`;
const SideRule = styled.span`
  width: 29px;
  height: 1px;
  margin: 2px 0 3px -3px;
  background: #d0d0d0;
`;
const SideRow = styled.div`
  display: flex;
  height: 23px;
  margin-left: ${({ $left }) => ($left ? -6 : 0)}px;
`;
const SideMore = styled.button`
  height: 8px;
`;

/* ---------- bottom ---------- */

const ColorRow = styled.div`
  display: flex;
  height: 26px;
  padding-left: 601px;
`;
const ColorBar = styled.div`
  display: flex;
  align-items: center;
  padding-left: 2px;
  border-right: 1px solid #d6d6d6;
`;
const ColorButton = styled.button`
  width: 16px;
  height: 16px;
  margin: 0 3px 0 4px;
  background: ${({ $c }) => $c};
`;
const StatusBar = styled.div`
  height: 22px;
  padding-left: 3px;
  border-top: 1px solid #a9a9a9;
  font-weight: 600;
  line-height: 18px;
  color: #111;
`;
const Taskbar = styled.footer`
  display: flex;
  align-items: center;
  gap: 4px;
  height: 40px;
  background: linear-gradient(#102833 0 1px, #6d8b9a 1px 2px, #2b566b 2px, #1d4c63 45%, #1b5069);
  color: #fff;
  font-size: 12px;
`;
const Start = styled.button`
  display: grid;
  place-items: center;
  flex: none;
  width: 56px;
  height: 40px;
`;
const Task = styled.button`
  display: flex;
  flex: none;
  align-items: center;
  gap: 6px;
  width: ${({ $w }) => $w || 147}px;
  height: 38px;
  padding-left: 9px;
  border: 1px solid #8fa9b6;
  border-radius: 2px;
  outline: 1px solid #0f2c3a;
  color: #fff;
  white-space: nowrap;
  background: ${({ $on }) => ($on
    ? 'linear-gradient(165deg, #d8e0e4, #93a6b0 45%, #728d9b 46%, #5f8192)'
    : 'linear-gradient(165deg, #93a5ae, #5a7b8c 45%, #35647c 46%, #2c6580)')};
`;
const Stack = styled.span`
  flex: none;
  width: 6px;
  height: 38px;
  margin-left: -3px;
  background: repeating-linear-gradient(90deg, #14384a 0 1px, #7f9ba9 1px 2px, #3f6b80 2px 3px);
`;
const Tray = styled.div`
  display: flex;
  align-items: center;
  flex: 1;
  gap: 11px;
  padding-left: 9px;
`;
const Clock = styled.time`
  display: flex;
  flex-direction: column;
  align-items: center;
  gap: 2px;
  margin-left: 2px;
  line-height: 18px;
`;
const Peek = styled.button`
  width: 13px;
  height: 38px;
  border: 1px solid #7b98a5;
  background: #3e6c80;
`;

const SpeedBall = styled.div`
  position: absolute;
  right: 50px;
  bottom: 43px;
  display: flex;
  align-items: center;
  gap: 8px;
  width: 104px;
  height: 40px;
  border: 1px solid #c8c8c8;
  border-radius: 20px 4px 4px 20px;
  background: #ececec;
  font-size: 10px;
  line-height: 15px;
  white-space: pre-line;
`;
const Meter = styled.div`
  flex: none;
  width: 46px;
  height: 48px;
  margin-left: -20px;
  border: 2px solid #b8c4bc;
  border-radius: 50%;
  background: linear-gradient(#136b4d 0 36%, #43c05c 37%);
  font: 15px/44px 'Open Sans', sans-serif;
  padding-left: 6px;
  color: #fff;
`;
const Watermark = styled.svg`
  position: absolute;
  right: 4px;
  bottom: 4px;
  z-index: 30;
  pointer-events: none;
`;

/* ---------- data ---------- */

const menus = [
  ['文件', 'F', 5], ['编辑', 'E'], ['视图', 'V', 15], ['插入', 'S', 15], ['格式', 'R', 15], ['工具', 'T', 15], ['装配', 'A'],
  ['优品软件', null, 15], ['信息', 'I'], ['分析', 'L'], ['首选项', 'P', 20], ['应用模块', 'N'], ['窗口', 'O', 15],
  ['GC工具箱', null, 15], ['星空外挂 V6.934F', null, 20], ['优模软件', 'D'], ['帮助', 'H'],
];

const tree = [
  { icon: 'clock', text: '历史记录模式' },
  { icon: 'modelview', text: '模型视图', exp: '+' },
  { icon: 'camera', text: '摄像机', exp: '+', ok: true },
  { icon: 'drawing', text: '图纸', exp: '+', ok: true },
  { icon: 'folderx', text: '用户表达式', exp: '+' },
  { icon: 'folder', text: '组', exp: '+' },
  { icon: 'folder', text: '模型历史记录', exp: '-' },
  { icon: 'body', text: '体 (0)', depth: 1 },
  ...[31, 32, 33, 34, 35, 36, 37].map((n) => ({ icon: 'trim', text: `修剪曲线 (${n})`, depth: 1 })),
  { icon: 'region', text: '偏置曲线 (38)', depth: 1 },
  { icon: 'trim', text: '修剪曲线 (39)', depth: 1, bold: true },
];
const rows = [...tree, ...Array.from({ length: 17 }, () => null)];

// name, space above the tab
const resources = [
  ['asmnav', 16], ['constr'], ['partnav'], ['books'], ['info', 12], ['page', 12],
  ['clock', 12], ['rainbow'], ['tool'], ['robot'], ['role1'], ['role2'],
];

const swatches = [
  '#f0c474', '#ffffff', '#efefef', '#43f243', '#42a9a9', '#4141ee', '#f04242', '#8686cb', '#64a864', '#a8648a',
  '#6486cb', '#42d09c', '#648864', '#efa8a8', '#6464ef', '#ef8686', '#428686', '#cbcb64', '#cb64cb',
];

/* ---------- composite parts ---------- */

const Controls = ({ color, bold }) => (
  <WinButtons $c={color}>
    {['M3 12h7', 'M4.500 5.500v-3h8v5h-3M1.500 5.500h8v5h-8z', 'M2 2l10 10M12 2 2 12'].map((d, i) => (
      <WinButton key={d} aria-label={['最小化', '还原', '关闭'][i]}>
        <svg width="14" height="14" viewBox="0 0 14 14">
          <path d={d} fill="none" stroke="currentColor" strokeWidth={i === 1 ? 1.3 : bold || i === 0 ? 2 : 1.5} />
        </svg>
      </WinButton>
    ))}
  </WinButtons>
);

const TreeRow = ({ node, i }) => (
  <Node $depth={node.depth ? 1 : 0} $bold={node.bold}>
    <Twig $depth={node.depth} $first={i === 0} $last={i === 6 || i === 16}>
      {node.exp && (
        <Expander aria-label="展开">
          <svg width="7" height="7" viewBox="0 0 7 7">
            <path d={node.exp === '+' ? 'M1 3.500h5M3.500 1v5' : 'M1 3.500h5'} stroke="#111" />
          </svg>
        </Expander>
      )}
    </Twig>
    {node.ok && <Icon name="check" size={13} />}
    {node.depth && (
      <TreeCheck><input type="checkbox" defaultChecked aria-label={node.text} /><Icon name="check" size={12} /></TreeCheck>
    )}
    <Icon name={node.icon} size={15} />
    <span>{node.text}</span>
  </Node>
);

const Section = ({ title, pb, children }) => (
  <Group $pb={pb}>
    <GroupHead><h3>{title}</h3><button aria-label="折叠"><Chevron up /></button></GroupHead>
    {children}
  </Group>
);

const BlockDialog = () => (
  <Dialog>
    <DialogTitle>
      <Icon name="gear" size={15} />
      <DialogHeading>创建方块</DialogHeading>
      <TitleButton aria-label="重置">
        <svg width="13" height="13" viewBox="0 0 13 13">
          <path d="M9 2.500a5 5 0 1 1-6 1" fill="none" stroke="#fff" strokeWidth="2" /><path d="M0 2h6v5z" fill="#fff" />
        </svg>
      </TitleButton>
      <TitleButton aria-label="关闭">
        <svg width="12" height="12" viewBox="0 0 12 12"><path d="M1 1l10 10M11 1 1 11" stroke="#fff" strokeWidth="2.400" /></svg>
      </TitleButton>
    </DialogTitle>
    <Section title="类型" pb={3}>
      <FieldRow $h={34}>
        <TypeBox>
          <Select label="类型" value="有界长方体" w={298} h={26} pl={24} />
          <Icon name="bbox" size={15} />
        </TypeBox>
      </FieldRow>
    </Section>
    <Section title="对象" pb={3}>
      <FieldRow $h={40}>
        <PickField><Star>*</Star>选择对象 (0)</PickField>
        <SmallButton aria-label="点对话框"><Icon name="points" /></SmallButton>
        <BigButton $hot aria-label="选择对象"><Icon name="cross" size={19} /></BigButton>
      </FieldRow>
    </Section>
    <Section title="参考 CSYS" pb={9}>
      <FieldRow $h={33}>
        <label htmlFor="ref">参考</label>
        <Select id="ref" value="WCS" w={141} h={25} pl={4} />
      </FieldRow>
      <FieldRow $h={28}>
        <Ready><Icon name="check" size={14} />指定方位</Ready>
        <BigButton aria-label="CSYS">
          <svg width="28" height="28" viewBox="0 0 28 28">
            <path d="M6 18V6" stroke="#2030c0" /><path d="M4 9l2-5 2 5z" fill="#2030c0" />
            <path d="M6 18l11-4" stroke="#20a020" /><path d="M15 12l5 1-4 3z" fill="#20a020" />
            <path d="M6 18l12 4" stroke="#d02020" /><path d="M16 19l4 4-5 0z" fill="#d02020" />
            <g fontFamily="Open Sans, sans-serif" fontSize="8" fontWeight="700" fill="#111">
              <text x="9" y="10">Z</text><text x="20" y="15">Y</text><text x="20" y="26">X</text>
            </g>
          </svg>
        </BigButton>
      </FieldRow>
    </Section>
    <Section title="设置" pb={12}>
      <FieldRow $h={30}>
        <label htmlFor="gap">间隙</label>
        <Combo><input id="gap" defaultValue="0" /><span>mm</span><Down /></Combo>
      </FieldRow>
      {['大小精度', '位置精度'].map((t) => (
        <FieldRow key={t}>
          <label htmlFor={t}>{t}</label>
          <Combo><input id={t} defaultValue="0" /><Down /></Combo>
        </FieldRow>
      ))}
      <FieldRow $h={17}>
        <label htmlFor="color">颜色</label>
        <Swatch id="color" />
      </FieldRow>
    </Section>
    <Section title="预览" pb={4}>
      <FieldRow $h={40}>
        <CheckLabel>
          <CheckCell>
            <input type="checkbox" defaultChecked />
            <svg width="13" height="13" viewBox="0 0 13 13"><path d="M3 6l3 4 5-7" fill="none" stroke="#3c4a90" strokeWidth="2" /></svg>
          </CheckCell>
          预览
        </CheckLabel>
        <span>显示结果</span>
        <BigButton aria-label="显示结果">
          <svg width="26" height="26" viewBox="0 0 26 26">
            <path d="M16 16l8 7" stroke="#c0c0c0" strokeWidth="4" /><circle cx="10.500" cy="10.500" r="8.500" fill="#cfcfcf" stroke="#b4b4b4" strokeWidth="1.500" />
          </svg>
        </BigButton>
      </FieldRow>
    </Section>
    <DialogFoot>
      <FoldUp aria-label="收起"><Down w={9} /></FoldUp>
      <Actions>
        <Action disabled>确定</Action>
        <Action disabled>应用</Action>
        <Action>取消</Action>
      </Actions>
    </DialogFoot>
  </Dialog>
);

const Hole = ({ x, y }) => (
  <g>
    <circle cx={x} cy={y} r="7.500" fill="#242424" />
    <path d={`M${x - 5} ${y + 3}a5 4.5 0 0 1 10 0`} fill="none" stroke="#777" strokeWidth="1.200" />
    <ellipse cx={x} cy={y + 4.5} rx="4" ry="3.500" fill="#1a1a1a" />
  </g>
);
const topHoles = [[275, 270], [318, 270], [383, 269], [448, 268], [512, 267], [577, 267], [620, 266]];
const lowHoles = [[277, 324], [320, 324], [385, 323], [449, 322], [514, 321], [579, 321], [621, 320]];
const pinHoles = [[295, 270], [601, 266], [296, 324], [602, 321]];

const PlateModel = () => (
  <svg role="img" aria-label="A1 模板">
    <defs>
      <linearGradient id="coneV"><stop offset="0" stopColor="#a8902a" /><stop offset=".4" stopColor="#ffe95a" /><stop offset="1" stopColor="#a8902a" /></linearGradient>
      <linearGradient id="coneH" x2="0" y2="1"><stop offset="0" stopColor="#e8cc40" /><stop offset=".4" stopColor="#ffe95a" /><stop offset="1" stopColor="#a8902a" /></linearGradient>
      <radialGradient id="knob" cx=".35" cy=".35"><stop offset="0" stopColor="#ffe95a" /><stop offset="1" stopColor="#b89420" /></radialGradient>
    </defs>
    <path d="M180 337 719 331v13L180 349z" fill="#202020" />
    <path d="M181 260 717 254l2 77-539 6z" fill="#6f6f6f" stroke="#2a2a2a" strokeWidth=".6" />
    <path d="M182 289h33q7 0 7 6v7q-1 5-7 5l-5-6h-28z" fill="#202020" />
    <path d="M717 284h-34q-8 1-8 6v6q0 7 9 7v-8h33z" fill="#202020" />
    <path d="M684 303h33" stroke="#3a3a3a" />
    {[...topHoles, ...lowHoles].map(([x, y]) => <Hole key={`${x}-${y}`} x={x} y={y} />)}
    {pinHoles.map(([x, y]) => <circle key={`${x}-${y}`} cx={x} cy={y} r="3" fill="#242424" />)}
    <g fontFamily="DejaVu Sans, sans-serif" fontSize="12">
      <text x="165" y="222" fontSize="14" fill="#348a34">YC</text>
      <text x="172" y="287" fill="#1c48d8">ZC</text>
      <text x="183" y="286" fill="#348a34">YC</text>
      <text x="165" y="314" fill="#1c48d8">ZC</text>
      <text x="222" y="333" fill="#d03434">XC</text>
      <text x="302" y="342" fontSize="14" fill="#c83434">XC</text>
      <text x="199" y="326" fontSize="8" fill="#222">A1</text>
    </g>
    <path d="M177 250v87" stroke="#f4f4f4" strokeWidth="4" />
    <path d="M180 250v87" stroke="#9c9c9c" strokeWidth="1.500" />
    <path d="M184 307v30" stroke="#d8d8d8" strokeWidth="2" />
    <path d="M180 270C222 273 243 300 251 335" fill="none" stroke="#9c9c9c" strokeWidth="4" />
    <path d="M180 270C222 273 243 300 251 334" fill="none" stroke="#f6f6f6" strokeWidth="2.500" />
    <path d="M183 307Q232 309 253 335" fill="none" stroke="#9c9c9c" strokeWidth="4" />
    <path d="M183 307Q232 309 253 334" fill="none" stroke="#f6f6f6" strokeWidth="2.500" />
    <path d="M180 337l97-1" stroke="#f4f4f4" strokeWidth="4" />
    <path d="M180 339l97-1" stroke="#a8a8a8" strokeWidth="1" />
    <path d="M177 228l7 25q-7 3-13 0z" fill="url(#coneV)" />
    <path d="M276 330v14l25-7z" fill="url(#coneH)" />
    <path d="M183 288l6 12q-1 5-6 5t-6-5z" fill="#a08a28" />
    <path d="M184 320v16M186 332h6" stroke="#1c48d8" strokeWidth="1.500" strokeDasharray="3 2" />
    {[[180, 270], [230, 291], [233, 316]].map(([x, y]) => <circle key={x} cx={x} cy={y} r="4.300" fill="url(#knob)" />)}
  </svg>
);

const SiteMark = () => (
  <Watermark width="300" height="104" viewBox="0 0 300 104" role="img" aria-label="3D世界网">
    <g stroke="#e6ecf2" strokeWidth="2" opacity=".9">
      <path d="M45 5 86 29v47L45 99 4 76V29z" fill="#4aa8dc" strokeWidth="3" />
      <path d="M45 5 17 22q20-2 44 3l13 5-4-11z" fill="#346aa8" strokeWidth="1" />
      <path d="M4 29l13-7q20-2 38 4-18 2-31 13v34L4 76z" fill="#6a9ed8" strokeWidth="1" />
      <path d="M86 29v28Q82 74 62 79l5-12V39L60 14z" fill="#66c2ee" strokeWidth="1" />
      <path d="M4 76q-2-26 20-38v32q6 16 21 29z" fill="#4a7cc0" strokeWidth="1" />
      <path d="M45 28 65 40v25L45 77 25 65V40z" fill="#346aa8" strokeWidth="5" stroke="#eef4fa" />
      <path d="M45 32 62 42 45 52 28 42z" fill="#6a9ed8" strokeWidth="1" />
      <path d="M62 42v21L45 73V52z" fill="#66c2ee" strokeWidth="1" />
    </g>
    <g fontFamily="Noto Sans CJK SC, sans-serif" fontWeight="900" fill="#5cc0ee" stroke="#eef6fa" paintOrder="stroke" opacity=".82">
      <text x="95" y="62" fontSize="47" strokeWidth="3">3D世界网</text>
      <text x="94" y="82" fontSize="18" fontFamily="DejaVu Sans, sans-serif" strokeWidth="3">www.3DSJW.COM</text>
    </g>
  </Watermark>
);

const taskIcons = {
  orb: <svg width="36" height="36" viewBox="0 0 36 36"><defs><radialGradient id="orb" cy=".8"><stop offset="0" stopColor="#4ac8f4" /><stop offset=".6" stopColor="#1c5c94" /><stop offset="1" stopColor="#17334f" /></radialGradient></defs><circle cx="18" cy="18" r="17" fill="url(#orb)" stroke="#7fa4b8" /><ellipse cx="18" cy="9" rx="12" ry="7" fill="#fff" opacity=".3" /><path d="M10 10q4-2 7 0l-1 7q-3-2-7 0z" fill="#f0602a" /><path d="M19 11q4 1 8-1l-1 7q-4 2-8 0z" fill="#8cc83c" /><path d="M9 19q4-2 7 0l-1 7q-3-2-7 0z" fill="#3c9ae4" /><path d="M18 20q4 1 8-1l-1 7q-4 2-8 0z" fill="#f8cc30" /></svg>,
  e360: <svg width="30" height="32" viewBox="0 0 30 32"><circle cx="15" cy="17" r="13" fill="#5cc428" /><path d="M8 17h14q0-7-7-7t-7 7q0 8 7 8 5 0 7-4" fill="none" stroke="#fff" strokeWidth="4" /><path d="M4 29Q-1 19 8 10q10-9 19-8" fill="none" stroke="#a8e468" strokeWidth="2" /></svg>,
  explorer: <svg width="32" height="32" viewBox="0 0 32 32"><path d="M1 4h9l2 3h18v22H1z" fill="#f0c850" stroke="#b08c30" /><path d="M5 2h4v4H5z" fill="#30a040" /><path d="M13 5h5v4h-5z" fill="#e04030" /><path d="M20 6h7v4h-7z" fill="#3a8ae0" /><path d="M1 9h29v20H1z" fill="#ffe798" stroke="#c8a040" /><path d="M5 31V21q0-2 3-2h17q3 0 3 2v10h-5v-7H10v7z" fill="#a8d4f0" stroke="#5a98c8" /></svg>,
  acad: <svg width="32" height="32" viewBox="0 0 32 32"><path d="M1 1h30v30H1z" fill="#0f8070" stroke="#fff" strokeWidth="2" /><path d="M6 27 12 6M12 6l6 21M8 20h8" fill="none" stroke="#e8f4f2" strokeWidth="4" /><path d="M23 4v18M19 22h11M23 22v8" stroke="#a0e0d4" strokeWidth="1.500" /><path d="M20 20h6v6h-6z" fill="none" stroke="#fff" /></svg>,
  mail: <svg width="32" height="32" viewBox="0 0 32 32"><circle cx="16" cy="16" r="14" fill="#c81420" stroke="#e87078" /><ellipse cx="16" cy="8" rx="10" ry="6" fill="#fff" opacity=".25" /><circle cx="16" cy="9" r="4" fill="none" stroke="#fff" strokeWidth="2" /><path d="M9 15h13M12 15q-2 5-5 6M10 19h12q0 7-4 8M16 19q-2 5-7 7M20 19q-2 6-7 9" fill="none" stroke="#fff" strokeWidth="2" /></svg>,
  zw: <svg width="32" height="32" viewBox="0 0 32 32"><path d="M1 5h30L16 31z" fill="#0c6cc0" /><path d="M1 5h15v26z" fill="#4ac0f4" /><path d="M22 8l9-3-13 22z" fill="#0a4a94" /><circle cx="15" cy="4" r="3.500" fill="#eee" /><path d="M15 6l-5 12M9 18h5l5-6v10l7-7" fill="none" stroke="#e8e8e8" strokeWidth="3" /><circle cx="10" cy="18" r="3" fill="#fff" /></svg>,
  bear: <svg width="34" height="34" viewBox="0 0 34 34"><path d="M2 2h7l3 3h10l3-3h7v9l-3 3v11l-5 7H10l-5-7V14l-3-3z" fill="#c0c0c0" stroke="#111" strokeWidth="2" /><circle cx="12" cy="14" r="3" fill="#666" stroke="#111" strokeWidth="1.500" /><circle cx="22" cy="14" r="3" fill="#666" stroke="#111" strokeWidth="1.500" /><path d="M13 22h8l-4 4z" fill="#111" /><path d="M10 27q7 5 14 0" fill="none" stroke="#111" strokeWidth="2" /></svg>,
  nx: <svg width="32" height="32" viewBox="0 0 32 32"><circle cx="17" cy="17" r="12" fill="#1c70d8" /><circle cx="13" cy="18" r="7" fill="#48d0f4" opacity=".8" /><path d="M21 8q7 4 6 11-4 2-5-3z" fill="#48c060" /><path d="M3 29q26 0 28-14 0-5-5-5" fill="none" stroke="#f0a020" strokeWidth="3" /><path d="M1 29l8-5-1 7z" fill="#f0a020" /><path d="M3 2h14l-3 16z" fill="#d01c38" stroke="#f88898" strokeWidth=".6" /></svg>,
  guard: <svg width="32" height="34" viewBox="0 0 32 34"><circle cx="16" cy="17" r="15" fill="#f4c81c" /><path d="M16 2q14 0 15 14-4-9-15-8-8-1-11 6 1-11 11-12z" fill="#58b030" /><path d="M16 32Q2 32 1 18q4 9 15 8 8 1 11-6-1 11-11 12z" fill="#fbe060" /><path d="M13 9h6v5h5v6h-5v5h-6v-5H8v-6h5z" fill="#2c8a2c" /></svg>,
};
const tasks = [
  ['e360', '【新提醒】发表...'], ['explorer', 'Windows 资...', 140], 'stack', ['acad', 'AutoCAD 2007...'],
  ['mail', '网易闪电邮'], ['zw', '中望3D 2014 ...'], ['bear', 'NCPLOT'], ['nx', 'NX 11.0.0.33 -...'],
  ['nx', 'NX 10.0.2.6 - ...', 147, true], ['guard', '360安全卫士'],
];

export default function App() {
  return (
    <Page>
      <GlobalStyle />
      <TitleBar>
        <Logo>NX</Logo>
        <Title>NX 10.0.2.6 - 建模 - [A1.prt （修改的） ]</Title>
        <Brand>SIEMENS</Brand>
        <Controls />
      </TitleBar>

      <MenuBar>
        <Grip $wide />
        <Icon name="nx" size={15} />
        {menus.map(([text, key, gap]) => (
          <MenuItem href="#" key={text} $gap={gap}>
            {text}{key && <>(<u>{key}</u>)</>}
          </MenuItem>
        ))}
        <Spacer />
        <Controls color="#111" bold />
      </MenuBar>

      <BarRow $h={32}>
        <Bar>
          <Grip />
          <Tools list="fresh open save | cut | undo v redo | redcube v | orient |" />
          <SearchBox><SearchInput placeholder="查找命令" aria-label="查找命令" /><Icon name="search" size={15} /></SearchBox>
          <Tools list=">" />
        </Bar>
        <Bar>
          <Grip />
          <Tools list="windows v solid v cube v cube wirecube plane plane2 v greybox v | door door2 >" />
        </Bar>
        <Bar>
          <Grip />
          <Select label="工作图层" value="254" w={49} ml={1} mr={4} pl={3} />
          <Tools list="layers layermove layercopy csys v | hand palette | gemred v gem2 gem3 gem4 | measure v ruler >" />
        </Bar>
        <Bar>
          <Grip />
          <Tools list="fourpt ruled mesh studio fit sheetred sweep swept offset grey v >" />
        </Bar>
      </BarRow>

      <BarRow $h={26} $gap={2}>
        <Bar>
          <Grip />
          <Tools list="datum v | extrude swept revolve redcube blend thick | pad pocket pattern mirror unite subtract v intersect book split shell draft slab boxhole thread joinp | edge flange step fan wheel >" />
        </Bar>
        <Bar>
          <Grip />
          <Tools list="partmove v flag engrave angle hole cyl cube ball v partdel partcopy v partpair v partdim v partgrp parttri partwand v partmove v partnodes axes axesred >" />
        </Bar>
        <Bar>
          <Grip />
          <Tools list="line arc circles rect spline" />
          <FontButton aria-label="文本">A</FontButton>
          <Tools list="region surfcurve proj proj2 net spline v extend v cylmove >" />
        </Bar>
      </BarRow>

      <BarRow $h={26}>
        <Bar>
          <Grip />
          <Tools list="sketch finish label profile line arc circle fillet chamfer rect spline plus offg v | trimg trimg2 cornerg | dimg v | perp symg conv v | boxesg cadg cadg2 >" />
        </Bar>
      </BarRow>

      <SelectionBar>
        <Select label="类型过滤器" value="没有选择过滤器" w={133} mr={7} />
        <Select label="选择范围" value="整个装配" w={140} mr={4} />
        <Tools list="refresh asmg | ~filterg filter v target treeg | marquee v | shade bluebox |" />
        <Select label="面规则" value="体的面" w={140} ml={2} mr={7} arrow="#2c83b8">
          <DropList role="listbox" aria-label="面规则">
            {['单个面', '相切面', '特征面', '体的面', '区域面', '相切区域面'].map((t) => (
              <DropItem key={t} role="option" aria-selected={t === '体的面'} $on={t === '体的面'}>{t}</DropItem>
            ))}
          </DropList>
        </Select>
        <Select label="曲线规则" value="单条曲线" w={140} mr={7} />
        <Select label="体规则" value="单个体" w={140} mr={4} />
        <Tools list="pathsel arrow | +snapall +endpt +midpt ctrlpt inter +center quad +exist oncurve onface | gridpt |" />
        <Select label="侧" value="内侧" w={112} ml={4} />
        <Spacer />
        <Tools list=">" />
      </SelectionBar>

      <Main>
        <ResourceBar>
          <SettingsTab aria-label="设置"><Icon name="gear" /></SettingsTab>
          {resources.map(([name, gap]) => (
            <ResourceTab key={name} aria-label={name} $gap={gap} $on={name === 'partnav'}>
              <Icon name={name} />
            </ResourceTab>
          ))}
        </ResourceBar>

        <NavPanel>
          <NavHead>
            部件导航器
            <svg width="15" height="11" viewBox="0 0 15 11"><path d="M1 1h13v9H1z" fill="none" stroke="#222" strokeWidth="1.500" /></svg>
          </NavHead>
          <NavBody>
            <Tree>
              <colgroup><col width="200" /><col width="100" /><col width="100" /><col /></colgroup>
              <thead><tr><Th colSpan={4}>名称<Down w={10} /></Th></tr></thead>
              <tbody>
                {rows.map((node, i) => (
                  <tr key={i}>
                    <Td $alt={i % 2 === 1}>{node && <TreeRow node={node} i={i} />}</Td>
                    <Td $alt={i % 2 === 1} /><Td $alt={i % 2 === 1} /><Td $alt={i % 2 === 1} />
                  </tr>
                ))}
              </tbody>
            </Tree>
          </NavBody>
          <Splitter />
          <NavFoot>
            {['相依性', '细节', '预览'].map((t) => <Fold key={t}>{t}<Chevron /></Fold>)}
          </NavFoot>
        </NavPanel>

        <Viewport>
          <PlateModel />
          <Triad>
            <svg viewBox="0 0 70 62">
              <path d="M12 17h25v11h1v18h-1v6H12z" fill="#aeb0af" />
              <path d="M11 50V16" stroke="#2a9a2a" strokeWidth="2" /><path d="M9 20l2-7 2 7z" fill="#2a9a2a" />
              <path d="M13 51V36" stroke="#0a2aa8" strokeWidth="4" /><path d="M9 38l4-4 4 4z" fill="#0a2aa8" />
              <path d="M13 51h32" stroke="#d82828" strokeWidth="2" /><path d="M42 48l12 3-12 3z" fill="#e03030" />
              <circle cx="12" cy="52" r="4" fill="#ddd" />
              <g fontFamily="DejaVu Sans, sans-serif" fontSize="10">
                <text x="7" y="12" fill="#348a34">Y</text><text x="10" y="34" fill="#1c58f0">Z</text><text x="56" y="55" fill="#c83434">X</text>
              </g>
            </svg>
          </Triad>
          <ViewNames><span>UP_view_Current</span><span>UP_view_Current</span></ViewNames>
        </Viewport>

        <RightDock>
          <SideBar>
            <SideGrip />
            {['key', 'trim', 'divide', 'length', 'smooth'].map((n) => <SideRow key={n}><Tool t={n} /></SideRow>)}
            <SideMore aria-label="更多"><svg width="6" height="8" viewBox="0 0 6 8"><path d="M5 0v8L1 4z" fill="#111" /></svg></SideMore>
          </SideBar>
          <SideBar>
            <SideGrip />
            {['xform', 'patch', 'flat', 'section', 'bridge', '-', 'wave', 'quilt', 'copyface', '--', 'sheetband', '---'].map((n) => (
              n[0] === '-' ? <SideRule key={n} /> : <SideRow key={n}><Tool t={n} /></SideRow>
            ))}
            <SideRow $left><Tool t="globe" /><Tool t="v" /></SideRow>
            <SideRow><Tool t="redgrid" /></SideRow>
            <SideMore aria-label="更多"><svg width="6" height="8" viewBox="0 0 6 8"><path d="M5 0v8L1 4z" fill="#111" /></svg></SideMore>
          </SideBar>
        </RightDock>

        <BlockDialog />
      </Main>

      <ColorRow>
        <ColorBar>
          <Grip />
          {swatches.map((c) => <ColorButton key={c} $c={c} aria-label={c} />)}
          <Tools list=">" />
        </ColorBar>
      </ColorRow>
      <StatusBar>选择面、边、曲线、点、实体或小平面体</StatusBar>

      <Taskbar>
        <Start aria-label="开始">{taskIcons.orb}</Start>
        {tasks.map((t) => (t === 'stack' ? <Stack key="stack" /> : (
          <Task key={t[1]} $w={t[2]} $on={t[3]}>{taskIcons[t[0]]}{t[1]}</Task>
        )))}
        <Tray>
          <span>CH</span>
          <svg width="15" height="9" viewBox="0 0 15 9"><path d="M0 0h15v9H0z" fill="#ccc" /><path d="M2 2.500h11M2 4.500h11M4 7h7" stroke="#444" strokeDasharray="1 1" /></svg>
          <svg width="8" height="16" viewBox="0 0 8 16"><path d="M1 1h5v4H1z" fill="none" stroke="#fff" /><path d="M1 11h6l-3 3z" fill="#fff" /></svg>
          <svg width="9" height="5" viewBox="0 0 9 5"><path d="M0 5l4.500-5L9 5z" fill="#fff" /></svg>
          <svg width="17" height="17" viewBox="0 0 17 17"><circle cx="8.500" cy="8.500" r="8" fill="#e8d020" stroke="#4a9a20" /><path d="M7 4h3v3h3v3h-3v3H7v-3H4V7h3z" fill="#185818" /></svg>
          <svg width="15" height="14" viewBox="0 0 15 14"><path d="M0 4h3l4-4v14l-4-4H0z" fill="#fff" /><path d="M9 4q2 3 0 6M12 2q3 5 0 10" fill="none" stroke="#fff" /></svg>
          <svg width="16" height="16" viewBox="0 0 16 16"><path d="M5 4h10v8H5zM7 15h7M1 1v4h3V1M2.500 5v9H6" fill="none" stroke="#fff" strokeWidth="1.500" /></svg>
          <Clock><span>21:57</span><span>2016/8/8</span></Clock>
        </Tray>
        <Peek aria-label="显示桌面" />
      </Taskbar>

      <SpeedBall>
        <Meter>67%</Meter>
        <svg width="9" height="26" viewBox="0 0 9 26"><path d="M4 9V2M1 4l3-3 3 3" fill="none" stroke="#e07060" strokeWidth="1.500" /><path d="M4 15v8M1 20l3 4 3-4" fill="none" stroke="#40a060" strokeWidth="1.500" /></svg>
        <span>{'0.07K/s\n0.01K/s'}</span>
      </SpeedBall>
      <SiteMark />
    </Page>
  );
}
